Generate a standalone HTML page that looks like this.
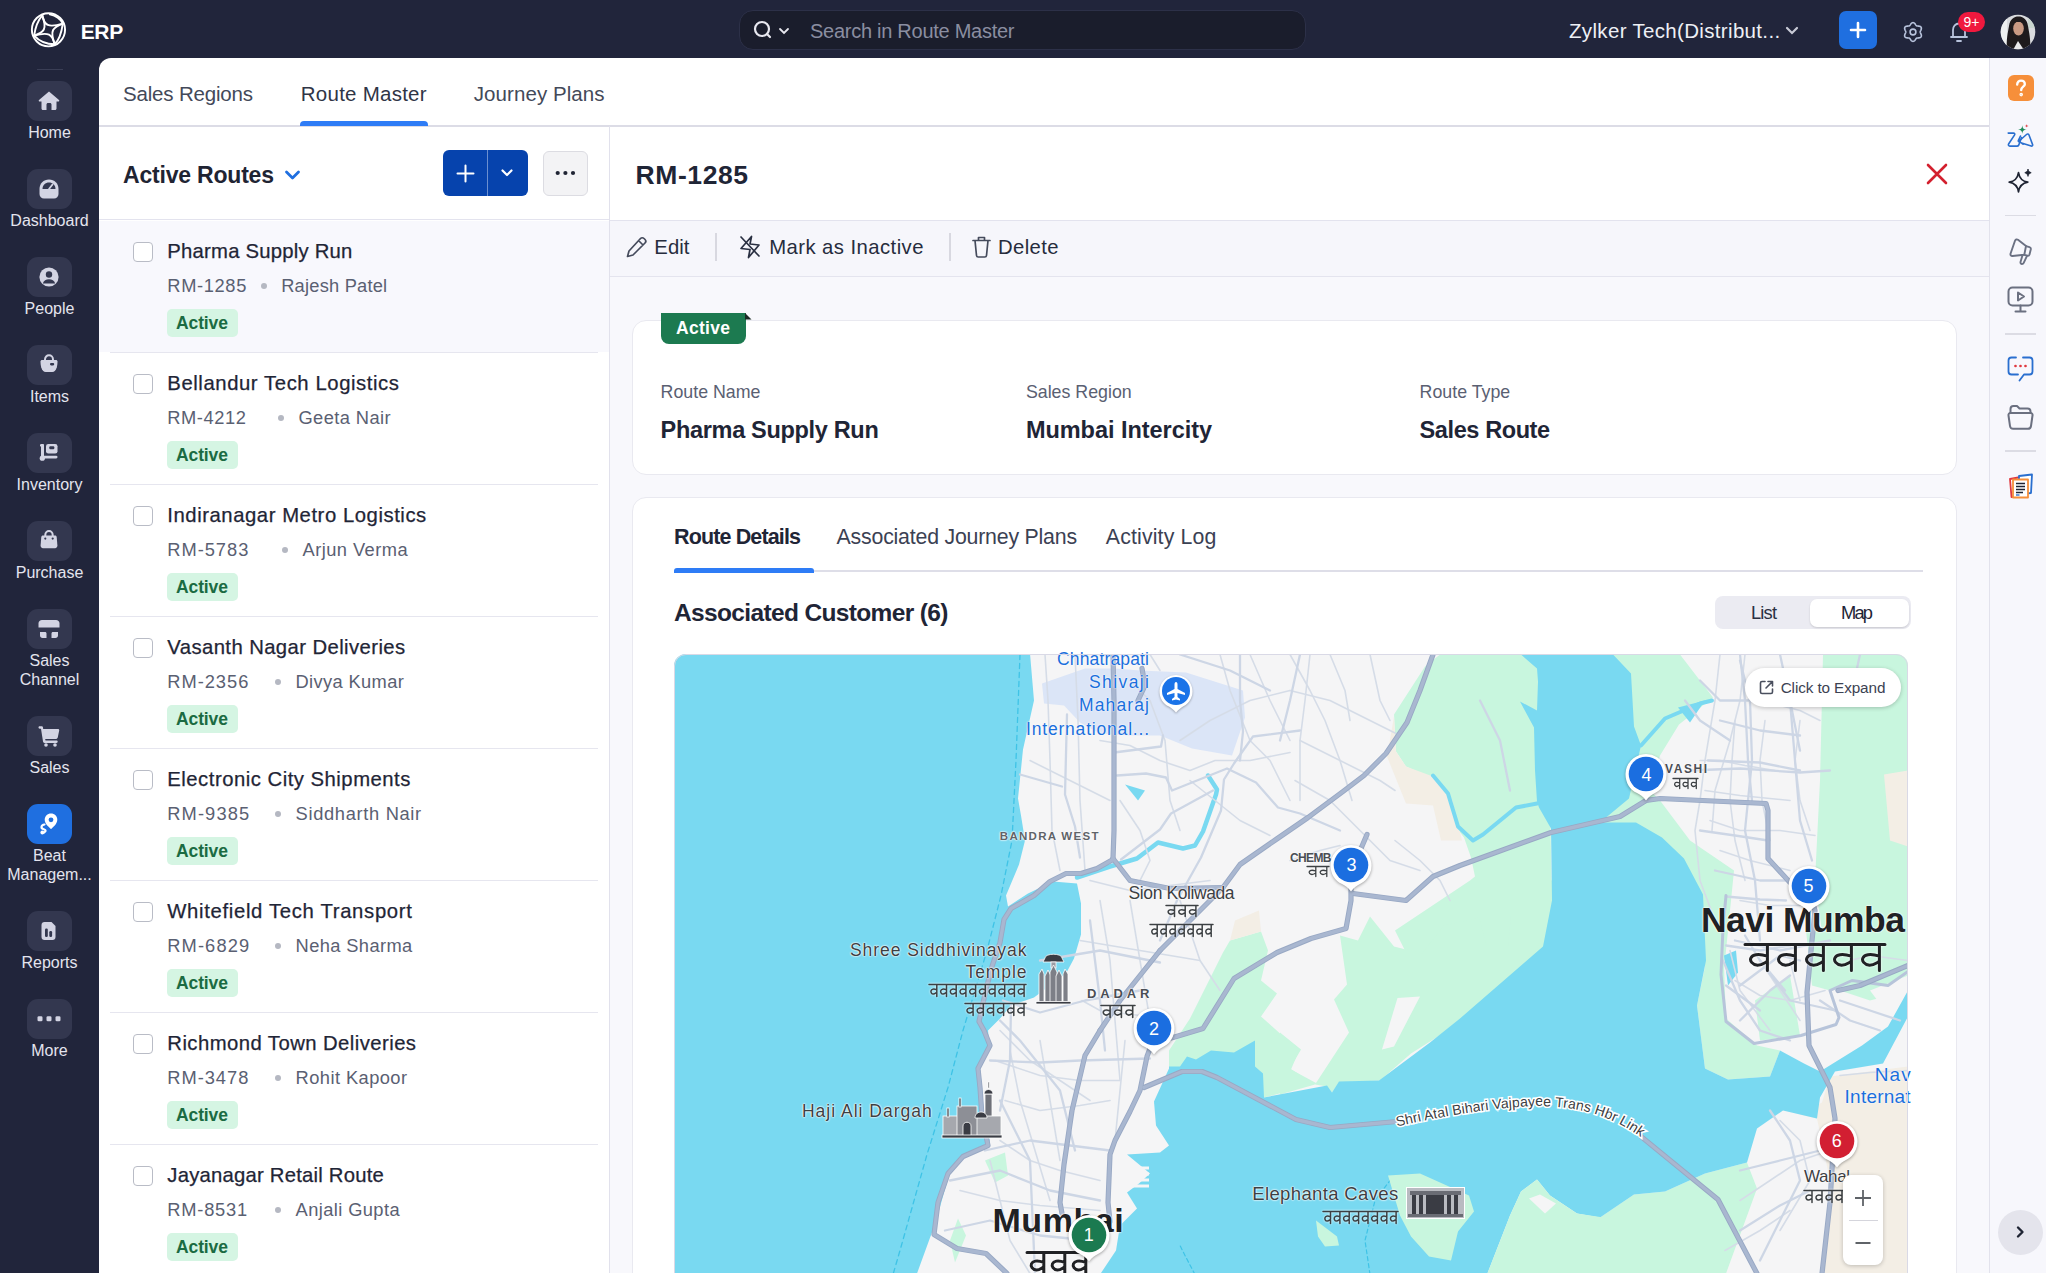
<!DOCTYPE html>
<html><head><meta charset="utf-8">
<style>
*{box-sizing:border-box;margin:0;padding:0}
html,body{width:2046px;height:1273px;overflow:hidden;background:#21253b;font-family:"Liberation Sans",sans-serif;}
.abs{position:absolute}
#top{position:absolute;left:0;top:0;width:2046px;height:58px;background:#21253b}
#side{position:absolute;left:0;top:58px;width:99px;height:1215px;background:#21253b}
#main{position:absolute;left:99px;top:58px;width:1891px;height:1215px;background:#fff;border-top-left-radius:12px;overflow:hidden}
#rail{position:absolute;left:1989px;top:58px;width:57px;height:1215px;background:#f7f7fc;border-left:1.5px solid #e2e2ec}
.t{position:absolute;white-space:nowrap;line-height:1}
.navi{position:absolute;left:27px;width:45px;height:40px;border-radius:11px;background:#33374f}
.navl{position:absolute;left:0;width:99px;text-align:center;color:#e4e4ee;font-size:16px;line-height:19px;white-space:nowrap}
.cb{position:absolute;left:133px;width:20px;height:20px;border:1.5px solid #b9bcc6;border-radius:4px;background:#fff}
.dot{position:absolute;width:6px;height:6px;border-radius:3px;background:#b5b8c2}
.badge{position:absolute;left:167px;width:71px;height:28px;border-radius:5px;background:#d5f5e3}
.divl{position:absolute;left:110px;width:488px;height:1px;background:#e6e6ef}
.mk{position:absolute}
</style></head><body>
<div id="top">
  <svg class="abs" style="left:26px;top:8px" width="44" height="44" viewBox="0 0 1273 1273" fill="none" stroke="#fff" stroke-width="56" stroke-linecap="round">
<circle cx="650" cy="630" r="480"/>
<path d="M470 215 C 530 500, 640 580, 1065 450"/><path d="M1065 450 C 780 560, 680 640, 830 1050"/><path d="M830 1050 C 760 760, 660 680, 235 800"/><path d="M235 800 C 520 700, 620 620, 470 215"/>
<path d="M690 185 C 920 240, 1010 340, 1065 450"/><path d="M1065 450 C 1030 700, 980 900, 830 1050"/><path d="M830 1050 C 590 1050, 380 960, 235 800"/><path d="M235 800 C 270 560, 330 380, 470 215"/>
</svg>
  <div class="abs" style="left:739px;top:10px;width:567px;height:40px;border-radius:14px;background:#1a1d2c;border:1px solid #2c3048"></div>
  <svg class="abs" style="left:752px;top:20px" width="40" height="20" viewBox="0 0 40 20" fill="none" stroke="#e8e8f0" stroke-width="2.2" stroke-linecap="round">
    <circle cx="10" cy="9" r="7"/><path d="M15 14 L18 17"/>
    <path d="M28 9 L32 13 L36 9" stroke-width="1.8"/>
  </svg>
  <svg class="abs" style="left:1784px;top:25px" width="16" height="12" viewBox="0 0 16 12" fill="none" stroke="#c8cad6" stroke-width="2.2" stroke-linecap="round"><path d="M3 3 L8 8 L13 3"/></svg>
  <div class="abs" style="left:1839px;top:11px;width:38px;height:38px;border-radius:7px;background:#1f6fe0"></div>
  <svg class="abs" style="left:1846px;top:18px" width="24" height="24" viewBox="0 0 24 24" stroke="#fff" stroke-width="2.6" stroke-linecap="round"><path d="M12 5 V19 M5 12 H19"/></svg>
  <svg class="abs" style="left:1901.3px;top:19.6px" width="24" height="24" viewBox="0 0 24 24" fill="none" stroke="#b8c3dc" stroke-width="1.6"><path d="M19.20 12.00 L19.24 12.38 L19.37 12.77 L19.56 13.20 L19.79 13.65 L20.02 14.15 L20.22 14.67 L20.35 15.21 L20.40 15.74 L20.33 16.24 L20.14 16.70 L19.84 17.09 L19.43 17.40 L18.95 17.63 L18.42 17.78 L17.87 17.87 L17.33 17.92 L16.82 17.95 L16.36 17.99 L15.95 18.08 L15.60 18.24 L15.29 18.46 L15.01 18.77 L14.74 19.15 L14.46 19.57 L14.15 20.02 L13.80 20.45 L13.40 20.84 L12.96 21.14 L12.49 21.33 L12.00 21.40 L11.51 21.33 L11.04 21.14 L10.60 20.84 L10.20 20.45 L9.85 20.02 L9.54 19.57 L9.26 19.15 L8.99 18.77 L8.71 18.46 L8.40 18.24 L8.05 18.08 L7.64 17.99 L7.18 17.95 L6.67 17.92 L6.13 17.87 L5.58 17.78 L5.05 17.63 L4.57 17.40 L4.16 17.09 L3.86 16.70 L3.67 16.24 L3.60 15.74 L3.65 15.21 L3.78 14.67 L3.98 14.15 L4.21 13.65 L4.44 13.20 L4.63 12.77 L4.76 12.38 L4.80 12.00 L4.76 11.62 L4.63 11.23 L4.44 10.80 L4.21 10.35 L3.98 9.85 L3.78 9.33 L3.65 8.79 L3.60 8.26 L3.67 7.76 L3.86 7.30 L4.16 6.91 L4.57 6.60 L5.05 6.37 L5.58 6.22 L6.13 6.13 L6.67 6.08 L7.18 6.05 L7.64 6.01 L8.05 5.92 L8.40 5.76 L8.71 5.54 L8.99 5.23 L9.26 4.85 L9.54 4.43 L9.85 3.98 L10.20 3.55 L10.60 3.16 L11.04 2.86 L11.51 2.67 L12.00 2.60 L12.49 2.67 L12.96 2.86 L13.40 3.16 L13.80 3.55 L14.15 3.98 L14.46 4.43 L14.74 4.85 L15.01 5.23 L15.29 5.54 L15.60 5.76 L15.95 5.92 L16.36 6.01 L16.82 6.05 L17.33 6.08 L17.87 6.13 L18.42 6.22 L18.95 6.37 L19.43 6.60 L19.84 6.91 L20.14 7.30 L20.33 7.76 L20.40 8.26 L20.35 8.79 L20.22 9.33 L20.02 9.85 L19.79 10.35 L19.56 10.80 L19.37 11.23 L19.24 11.62 L19.20 12.00Z"/><circle cx="12" cy="12" r="2.9"/></svg>
  <svg class="abs" style="left:1946px;top:18px" width="26" height="26" viewBox="0 0 26 26" fill="none" stroke="#b8c3dc" stroke-width="1.8" stroke-linecap="round" stroke-linejoin="round"><path d="M7 19 V12 C7 8.5 9.5 5.5 13 5.5 C16.5 5.5 19 8.5 19 12 V19"/><path d="M5 19 H21"/><path d="M11 23 H15"/></svg>
  <div class="abs" style="left:1958px;top:12px;width:27px;height:20px;border-radius:10px;background:#f0193e;color:#fff;font-size:14px;text-align:center;line-height:20px">9+</div>
  <svg class="abs" style="left:2000px;top:14px" width="36" height="36" viewBox="0 0 36 36"><defs><clipPath id="avc"><circle cx="18" cy="18" r="17.3"/></clipPath></defs><g clip-path="url(#avc)">
<rect width="36" height="36" fill="#d9dbde"/><rect x="0" y="0" width="7" height="36" fill="#eef0f0"/><rect x="28" y="4" width="8" height="10" fill="#c9d6cf"/>
<path d="M7 36 C6 26 8 18 9 12 C10 5 14 2.5 18.5 2.5 C23 2.5 27 5 28 12 C29 18 31 26 30 36 Z" fill="#1e1a1c"/>
<ellipse cx="18.5" cy="14.5" rx="5.3" ry="7" fill="#c99a83"/>
<path d="M13 36 L18 27 L24 36 Z" fill="#e9e9ea"/>
<path d="M12.5 9 C14 5 22 4.5 24 9 C22 7.5 15 7.5 12.5 9 Z" fill="#1e1a1c"/>
</g></svg>
</div>

<div id="toptexts"><div class="t" style="left:80.7px;top:21.1px;font-size:21.0px;font-weight:bold;color:#ffffff;letter-spacing:-0.34px;">ERP</div><div class="t" style="left:810.0px;top:20.7px;font-size:20.0px;font-weight:normal;color:#8a8ea1;letter-spacing:-0.27px;">Search in Route Master</div><div class="t" style="left:1569.0px;top:20.7px;font-size:20.5px;font-weight:normal;color:#eef0f5;letter-spacing:0.33px;">Zylker Tech(Distribut...</div></div><div id="side">
  <div class="abs" style="left:37px;top:11px;width:26px;height:1px;background:#3a3e55"></div>

  <div class="navi" style="top:23px"></div>
  <svg class="abs" style="left:37px;top:31px" width="24" height="24" viewBox="0 0 24 24" fill="#d3d4e3"><path d="M12 2.5 L22 11 C22.6 11.6 22.2 12.6 21.3 12.6 H19.5 V19.5 C19.5 20.3 18.9 21 18 21 H14.5 V15.5 C14.5 14.7 13.8 14 13 14 H11 C10.2 14 9.5 14.7 9.5 15.5 V21 H6 C5.1 21 4.5 20.3 4.5 19.5 V12.6 H2.7 C1.8 12.6 1.4 11.6 2 11 Z"/></svg>
  <div class="navl" style="top:65px">Home</div>

  <div class="navi" style="top:111px"></div>
  <svg class="abs" style="left:38px;top:120px" width="22" height="22" viewBox="0 0 22 22"><path d="M11 1.5 C16.5 1.5 20.5 5.5 20.5 11 V16 C20.5 18.5 18.5 20.5 16 20.5 H6 C3.5 20.5 1.5 18.5 1.5 16 V11 C1.5 5.5 5.5 1.5 11 1.5 Z" fill="#d3d4e3"/><path d="M4.5 11 C4.5 7 7.5 4.5 11 4.5 C14.5 4.5 17.5 7 17.5 11 Z" fill="#33374f"/><path d="M11 11 L14.5 6.5" stroke="#d3d4e3" stroke-width="1.8" stroke-linecap="round"/></svg>
  <div class="navl" style="top:153px">Dashboard</div>

  <div class="navi" style="top:199px"></div>
  <svg class="abs" style="left:38px;top:208px" width="22" height="22" viewBox="0 0 22 22"><circle cx="11" cy="11" r="9.6" fill="#d3d4e3"/><circle cx="11" cy="8.5" r="3.2" fill="#33374f"/><path d="M4.8 17.5 C5.8 14.3 8 13.2 11 13.2 C14 13.2 16.2 14.3 17.2 17.5 Z" fill="#33374f"/></svg>
  <div class="navl" style="top:241px">People</div>

  <div class="navi" style="top:287px"></div>
  <svg class="abs" style="left:38px;top:294px" width="22" height="22" viewBox="0 0 22 22"><path d="M7 9 V7.5 C7 5 8.8 3.3 11 3.3 C13.2 3.3 15 5 15 7.5 V9" fill="none" stroke="#d3d4e3" stroke-width="2"/><path d="M2.5 9.5 C2.5 8.6 3.2 8 4 8 H18 C18.8 8 19.5 8.6 19.5 9.5 C19.5 14 18.5 17 17 18.8 C16.3 19.6 15.3 20 14.3 20 H7.7 C6.7 20 5.7 19.6 5 18.8 C3.5 17 2.5 14 2.5 9.5 Z" fill="#d3d4e3"/><rect x="12" y="11" width="4.2" height="2.4" rx="1.1" fill="#33374f"/></svg>
  <div class="navl" style="top:329px">Items</div>

  <div class="navi" style="top:375px"></div>
  <svg class="abs" style="left:38px;top:383px" width="22" height="22" viewBox="0 0 22 22" fill="#d3d4e3"><rect x="3" y="3" width="3" height="14" rx="1.5"/><rect x="2" y="3" width="4" height="2.6" rx="1.2"/><rect x="4" y="14.8" width="15.5" height="2.6" rx="1.3"/><circle cx="4.3" cy="17.2" r="2.6"/><rect x="8" y="3" width="11.5" height="9.5" rx="2.3"/><rect x="11.3" y="5.3" width="5" height="3" rx="1" fill="#33374f"/></svg>
  <div class="navl" style="top:417px">Inventory</div>

  <div class="navi" style="top:463px"></div>
  <svg class="abs" style="left:38px;top:470px" width="22" height="22" viewBox="0 0 22 22"><path d="M7.3 9 V7 C7.3 4.6 9 3 11 3 C13 3 14.7 4.6 14.7 7 V9" fill="none" stroke="#d3d4e3" stroke-width="2"/><path d="M5 7.5 H17 C18 7.5 18.6 8.2 18.7 9 L19.4 17.6 C19.5 19 18.5 20.2 17 20.2 H5 C3.5 20.2 2.5 19 2.6 17.6 L3.3 9 C3.4 8.2 4 7.5 5 7.5 Z" fill="#d3d4e3"/><circle cx="7.3" cy="10.6" r="1.1" fill="#33374f"/><circle cx="14.7" cy="10.6" r="1.1" fill="#33374f"/></svg>
  <div class="navl" style="top:505px">Purchase</div>

  <div class="navi" style="top:551px"></div>
  <svg class="abs" style="left:37px;top:560px" width="24" height="22" viewBox="0 0 24 22" fill="#d3d4e3"><path d="M5 2 H19 C21 2 22.5 3.5 22.5 5.5 V9.5 H1.5 V5.5 C1.5 3.5 3 2 5 2 Z"/><path d="M3 11.5 H21 V14 H16 C15 14 14.5 14.6 14.5 15.5 V20 H18.5 C19.9 20 21 18.9 21 17.5 V11.5 Z"/><path d="M3 11.5 V17.5 C3 18.9 4.1 20 5.5 20 H9.5 V15.5 C9.5 14.6 9 14 8 14 H3 Z"/></svg>
  <div class="navl" style="top:593px">Sales<br>Channel</div>

  <div class="navi" style="top:658px"></div>
  <svg class="abs" style="left:37px;top:667px" width="24" height="22" viewBox="0 0 24 22" fill="#d3d4e3"><path d="M1.5 2.5 C1.5 1.8 2 1.3 2.7 1.3 H4.5 C5.3 1.3 5.9 1.8 6 2.6 L6.2 4 H21 C21.8 4 22.4 4.7 22.2 5.5 L20.8 12.2 C20.6 13.2 19.7 14 18.6 14 H8.2 L8.5 15.5 H19.5 C20.2 15.5 20.7 16 20.7 16.7 C20.7 17.4 20.2 17.9 19.5 17.9 H7.5 C6.7 17.9 6.1 17.4 6 16.6 L4 3.7 H2.7 C2 3.7 1.5 3.2 1.5 2.5 Z"/><circle cx="9" cy="20" r="1.8"/><circle cx="18" cy="20" r="1.8"/></svg>
  <div class="navl" style="top:700px">Sales</div>

  <div class="navi" style="top:746px;background:#1f6fe0"></div>
  <svg class="abs" style="left:36px;top:754px" width="26" height="24" viewBox="0 0 26 24"><path d="M15 1.5 C18.6 1.5 21.3 4.2 21.3 7.8 C21.3 12 16.6 15.8 15 17 C13.4 15.8 8.7 12 8.7 7.8 C8.7 4.2 11.4 1.5 15 1.5 Z" fill="#fff"/><circle cx="15" cy="7.8" r="2.4" fill="#1f6fe0"/><path d="M8.5 12.5 C5 13 4.6 16.2 7.2 17 C9.6 17.7 10.8 19 8 20.6" fill="none" stroke="#fff" stroke-width="2.2" stroke-linecap="round"/><circle cx="6.3" cy="20.5" r="1.9" fill="#fff"/></svg>
  <div class="navl" style="top:788px">Beat<br>Managem...</div>

  <div class="navi" style="top:853px"></div>
  <svg class="abs" style="left:38px;top:862px" width="22" height="22" viewBox="0 0 22 22"><path d="M6.5 2 H13.5 L17.5 6 V17 C17.5 18.8 16.3 20 14.5 20 H6.5 C4.7 20 3.5 18.8 3.5 17 V5 C3.5 3.2 4.7 2 6.5 2 Z" fill="#d3d4e3"/><rect x="7" y="8.5" width="2.8" height="8.5" rx="1.2" fill="#33374f"/><rect x="11.3" y="11" width="2.8" height="6" rx="1.2" fill="#33374f"/></svg>
  <div class="navl" style="top:895px">Reports</div>

  <div class="navi" style="top:941px"></div>
  <svg class="abs" style="left:36px;top:951px" width="26" height="20" viewBox="0 0 26 20" fill="#d3d4e3"><rect x="1.5" y="7.3" width="5" height="5" rx="1.3"/><rect x="10.5" y="7.3" width="5" height="5" rx="1.3"/><rect x="19.5" y="7.3" width="5" height="5" rx="1.3"/></svg>
  <div class="navl" style="top:983px">More</div>

</div>


<div id="main"></div>
<div class="t" style="left:123.0px;top:84.0px;font-size:20.5px;font-weight:normal;color:#434959;letter-spacing:-0.18px;">Sales Regions</div>
<div class="t" style="left:300.8px;top:84.0px;font-size:20.5px;font-weight:normal;color:#2f3546;letter-spacing:0.25px;">Route Master</div>
<div class="t" style="left:473.8px;top:84.0px;font-size:20.5px;font-weight:normal;color:#434959;letter-spacing:0.07px;">Journey Plans</div>
<div class="abs" style="left:99px;top:125px;width:1891px;height:1.5px;background:#dcdce6"></div>
<div class="abs" style="left:300px;top:121px;width:128px;height:5px;border-radius:4px 4px 0 0;background:#2e7cf6"></div>
<div class="abs" style="left:609px;top:126px;width:1px;height:1147px;background:#e1e1ec"></div>
<div class="t" style="left:123.0px;top:163.6px;font-size:23.0px;font-weight:bold;color:#1f2433;letter-spacing:-0.20px;">Active Routes</div>
<svg class="abs" style="left:284px;top:168px" width="17" height="14" viewBox="0 0 17 14" fill="none" stroke="#1f6fe0" stroke-width="2.8" stroke-linecap="round" stroke-linejoin="round"><path d="M2.5 4 L8.5 10 L14.5 4"/></svg>
<div class="abs" style="left:443px;top:150px;width:85px;height:46px;border-radius:6px;background:#0643ad"></div>
<div class="abs" style="left:487px;top:150px;width:1px;height:46px;background:#6b8fd0"></div>
<svg class="abs" style="left:456px;top:164px" width="19" height="19" viewBox="0 0 19 19" stroke="#fff" stroke-width="2" stroke-linecap="round"><path d="M9.5 1.5 V17.5 M1.5 9.5 H17.5"/></svg>
<svg class="abs" style="left:500px;top:167px" width="14" height="12" viewBox="0 0 14 12" fill="none" stroke="#fff" stroke-width="2.2" stroke-linecap="round" stroke-linejoin="round"><path d="M2.5 3.5 L7 8 L11.5 3.5"/></svg>
<div class="abs" style="left:543px;top:151px;width:45px;height:45px;border-radius:6px;background:#f3f3f5;border:1px solid #dcdce2"></div>
<svg class="abs" style="left:554px;top:169px" width="24" height="8" viewBox="0 0 24 8" fill="#1f2433"><circle cx="3.7" cy="4" r="2.1"/><circle cx="11.4" cy="4" r="2.1"/><circle cx="19" cy="4" r="2.1"/></svg>
<div class="abs" style="left:99px;top:219px;width:510px;height:1px;background:#e3e3ee"></div>
<div class="abs" style="left:99px;top:220.5px;width:510px;height:131.5px;background:#f8f8fd"></div>
<div class="cb" style="top:242.0px"></div>
<div class="t" style="left:167.3px;top:241.1px;font-size:20.3px;font-weight:normal;color:#1f2536;letter-spacing:0.22px;-webkit-text-stroke:0.25px #1f2536;">Pharma Supply Run</div>
<div class="t" style="left:167.3px;top:276.5px;font-size:18.3px;font-weight:normal;color:#5a6072;letter-spacing:0.64px;">RM-1285</div>
<div class="dot" style="left:261.0px;top:283.0px"></div>
<div class="t" style="left:281.2px;top:276.5px;font-size:18.3px;font-weight:normal;color:#5a6072;letter-spacing:0.21px;">Rajesh Patel</div>
<div class="badge" style="top:309.0px"></div>
<div class="t" style="left:176.0px;top:314.7px;font-size:17.5px;font-weight:bold;color:#1b6b42;letter-spacing:-0.11px;">Active</div>
<div class="divl" style="top:351.5px"></div>
<div class="cb" style="top:374.0px"></div>
<div class="t" style="left:167.3px;top:373.1px;font-size:20.3px;font-weight:normal;color:#1f2536;letter-spacing:0.58px;-webkit-text-stroke:0.25px #1f2536;">Bellandur Tech Logistics</div>
<div class="t" style="left:167.3px;top:408.5px;font-size:18.3px;font-weight:normal;color:#5a6072;letter-spacing:0.57px;">RM-4212</div>
<div class="dot" style="left:278.0px;top:415.0px"></div>
<div class="t" style="left:298.5px;top:408.5px;font-size:18.3px;font-weight:normal;color:#5a6072;letter-spacing:0.40px;">Geeta Nair</div>
<div class="badge" style="top:441.0px"></div>
<div class="t" style="left:176.0px;top:446.7px;font-size:17.5px;font-weight:bold;color:#1b6b42;letter-spacing:-0.11px;">Active</div>
<div class="divl" style="top:483.5px"></div>
<div class="cb" style="top:506.0px"></div>
<div class="t" style="left:167.3px;top:505.1px;font-size:20.3px;font-weight:normal;color:#1f2536;letter-spacing:0.55px;-webkit-text-stroke:0.25px #1f2536;">Indiranagar Metro Logistics</div>
<div class="t" style="left:167.3px;top:540.5px;font-size:18.3px;font-weight:normal;color:#5a6072;letter-spacing:0.97px;">RM-5783</div>
<div class="dot" style="left:282.0px;top:547.0px"></div>
<div class="t" style="left:302.6px;top:540.5px;font-size:18.3px;font-weight:normal;color:#5a6072;letter-spacing:0.44px;">Arjun Verma</div>
<div class="badge" style="top:573.0px"></div>
<div class="t" style="left:176.0px;top:578.7px;font-size:17.5px;font-weight:bold;color:#1b6b42;letter-spacing:-0.11px;">Active</div>
<div class="divl" style="top:615.5px"></div>
<div class="cb" style="top:638.0px"></div>
<div class="t" style="left:167.3px;top:637.1px;font-size:20.3px;font-weight:normal;color:#1f2536;letter-spacing:0.41px;-webkit-text-stroke:0.25px #1f2536;">Vasanth Nagar Deliveries</div>
<div class="t" style="left:167.3px;top:672.5px;font-size:18.3px;font-weight:normal;color:#5a6072;letter-spacing:0.97px;">RM-2356</div>
<div class="dot" style="left:274.8px;top:679.0px"></div>
<div class="t" style="left:295.4px;top:672.5px;font-size:18.3px;font-weight:normal;color:#5a6072;letter-spacing:0.38px;">Divya Kumar</div>
<div class="badge" style="top:705.0px"></div>
<div class="t" style="left:176.0px;top:710.7px;font-size:17.5px;font-weight:bold;color:#1b6b42;letter-spacing:-0.11px;">Active</div>
<div class="divl" style="top:747.5px"></div>
<div class="cb" style="top:770.0px"></div>
<div class="t" style="left:167.3px;top:769.1px;font-size:20.3px;font-weight:normal;color:#1f2536;letter-spacing:0.50px;-webkit-text-stroke:0.25px #1f2536;">Electronic City Shipments</div>
<div class="t" style="left:167.3px;top:804.5px;font-size:18.3px;font-weight:normal;color:#5a6072;letter-spacing:1.10px;">RM-9385</div>
<div class="dot" style="left:274.8px;top:811.0px"></div>
<div class="t" style="left:295.6px;top:804.5px;font-size:18.3px;font-weight:normal;color:#5a6072;letter-spacing:0.67px;">Siddharth Nair</div>
<div class="badge" style="top:837.0px"></div>
<div class="t" style="left:176.0px;top:842.7px;font-size:17.5px;font-weight:bold;color:#1b6b42;letter-spacing:-0.11px;">Active</div>
<div class="divl" style="top:879.5px"></div>
<div class="cb" style="top:902.0px"></div>
<div class="t" style="left:167.3px;top:901.1px;font-size:20.3px;font-weight:normal;color:#1f2536;letter-spacing:0.67px;-webkit-text-stroke:0.25px #1f2536;">Whitefield Tech Transport</div>
<div class="t" style="left:167.3px;top:936.5px;font-size:18.3px;font-weight:normal;color:#5a6072;letter-spacing:1.10px;">RM-6829</div>
<div class="dot" style="left:274.8px;top:943.0px"></div>
<div class="t" style="left:295.6px;top:936.5px;font-size:18.3px;font-weight:normal;color:#5a6072;letter-spacing:0.38px;">Neha Sharma</div>
<div class="badge" style="top:969.0px"></div>
<div class="t" style="left:176.0px;top:974.7px;font-size:17.5px;font-weight:bold;color:#1b6b42;letter-spacing:-0.11px;">Active</div>
<div class="divl" style="top:1011.5px"></div>
<div class="cb" style="top:1034.0px"></div>
<div class="t" style="left:167.3px;top:1033.1px;font-size:20.3px;font-weight:normal;color:#1f2536;letter-spacing:0.44px;-webkit-text-stroke:0.25px #1f2536;">Richmond Town Deliveries</div>
<div class="t" style="left:167.3px;top:1068.5px;font-size:18.3px;font-weight:normal;color:#5a6072;letter-spacing:0.97px;">RM-3478</div>
<div class="dot" style="left:274.8px;top:1075.0px"></div>
<div class="t" style="left:295.6px;top:1068.5px;font-size:18.3px;font-weight:normal;color:#5a6072;letter-spacing:0.43px;">Rohit Kapoor</div>
<div class="badge" style="top:1101.0px"></div>
<div class="t" style="left:176.0px;top:1106.7px;font-size:17.5px;font-weight:bold;color:#1b6b42;letter-spacing:-0.11px;">Active</div>
<div class="divl" style="top:1143.5px"></div>
<div class="cb" style="top:1166.0px"></div>
<div class="t" style="left:167.3px;top:1165.1px;font-size:20.3px;font-weight:normal;color:#1f2536;letter-spacing:0.22px;-webkit-text-stroke:0.25px #1f2536;">Jayanagar Retail Route</div>
<div class="t" style="left:167.3px;top:1200.5px;font-size:18.3px;font-weight:normal;color:#5a6072;letter-spacing:0.77px;">RM-8531</div>
<div class="dot" style="left:274.8px;top:1207.0px"></div>
<div class="t" style="left:295.6px;top:1200.5px;font-size:18.3px;font-weight:normal;color:#5a6072;letter-spacing:0.40px;">Anjali Gupta</div>
<div class="badge" style="top:1233.0px"></div>
<div class="t" style="left:176.0px;top:1238.7px;font-size:17.5px;font-weight:bold;color:#1b6b42;letter-spacing:-0.11px;">Active</div>
<div class="t" style="left:635.5px;top:162.0px;font-size:26.5px;font-weight:bold;color:#1f2536;letter-spacing:0.59px;">RM-1285</div>
<svg class="abs" style="left:1925px;top:162px" width="24" height="24" viewBox="0 0 24 24" stroke="#d3202e" stroke-width="2.6" stroke-linecap="round"><path d="M3 3 L21 21 M21 3 L3 21"/></svg>
<div class="abs" style="left:610px;top:220px;width:1379px;height:1053px;background:#f8f8fc"></div>
<div class="abs" style="left:610px;top:219.5px;width:1379px;height:1px;background:#e3e3ee"></div>
<div class="abs" style="left:610px;top:220.5px;width:1379px;height:55.5px;background:#f6f6fb"></div>
<div class="abs" style="left:610px;top:276px;width:1379px;height:1px;background:#e4e4ee"></div>
<svg class="abs" style="left:625px;top:236px" width="23" height="22" viewBox="0 0 23 22" fill="none" stroke="#454b5c" stroke-width="1.7" stroke-linejoin="round"><path d="M15.5 2.5 C16.5 1.5 18 1.5 19 2.5 L20 3.5 C21 4.5 21 6 20 7 L8 19 L2.5 20.5 L4 15 Z M13.5 4.5 L18 9"/></svg>
<div class="t" style="left:654.3px;top:237.1px;font-size:20.3px;font-weight:normal;color:#262c3d;letter-spacing:0.08px;">Edit</div>
<div class="abs" style="left:715px;top:233px;width:1.5px;height:28px;background:#d8d8e0"></div>
<svg class="abs" style="left:739px;top:235px" width="22" height="24" viewBox="0 0 22 24" fill="none" stroke="#2a3042" stroke-width="1.7" stroke-linejoin="round" stroke-linecap="round"><path d="M12.5 1.5 L11 9 L20 10 L9.5 22.5 L11 14.5 L2 13.5 Z"/><path d="M2 2 L20 21"/></svg>
<div class="t" style="left:769.2px;top:237.1px;font-size:20.3px;font-weight:normal;color:#262c3d;letter-spacing:0.44px;">Mark as Inactive</div>
<div class="abs" style="left:949px;top:233px;width:1.5px;height:28px;background:#d8d8e0"></div>
<svg class="abs" style="left:971px;top:235px" width="21" height="24" viewBox="0 0 21 24" fill="none" stroke="#454b5c" stroke-width="1.7" stroke-linejoin="round" stroke-linecap="round"><path d="M2 5.5 H19 M7.5 5.5 V2.5 H13.5 V5.5 M4 5.5 L5.5 20.5 C5.6 21.4 6.3 22 7.2 22 H13.8 C14.7 22 15.4 21.4 15.5 20.5 L17 5.5"/></svg>
<div class="t" style="left:998.0px;top:237.1px;font-size:20.3px;font-weight:normal;color:#262c3d;letter-spacing:0.37px;">Delete</div>
<div class="abs" style="left:632px;top:320px;width:1325px;height:155px;background:#fff;border:1px solid #e9e9f0;border-radius:14px"></div>
<div class="abs" style="left:661px;top:313px;width:85px;height:31px;background:#1c7a50;border-radius:0 0 8px 8px"></div>
<svg class="abs" style="left:745px;top:313px" width="7" height="7" viewBox="0 0 7 7"><path d="M0 0 L6.5 6.5 H0 Z" fill="#1b2a25"/></svg>
<div class="t" style="left:676.0px;top:319.8px;font-size:17.5px;font-weight:bold;color:#ffffff;letter-spacing:0.29px;">Active</div>
<div class="t" style="left:660.6px;top:384.0px;font-size:17.8px;font-weight:normal;color:#5a6072;letter-spacing:0.00px;">Route Name</div>
<div class="t" style="left:660.6px;top:418.6px;font-size:23.5px;font-weight:bold;color:#1f2536;letter-spacing:-0.32px;">Pharma Supply Run</div>
<div class="t" style="left:1025.9px;top:384.0px;font-size:17.8px;font-weight:normal;color:#5a6072;letter-spacing:0.00px;">Sales Region</div>
<div class="t" style="left:1025.9px;top:418.6px;font-size:23.5px;font-weight:bold;color:#1f2536;letter-spacing:-0.04px;">Mumbai Intercity</div>
<div class="t" style="left:1419.6px;top:384.0px;font-size:17.8px;font-weight:normal;color:#5a6072;letter-spacing:0.00px;">Route Type</div>
<div class="t" style="left:1419.6px;top:418.6px;font-size:23.5px;font-weight:bold;color:#1f2536;letter-spacing:-0.40px;">Sales Route</div>
<div class="abs" style="left:632px;top:497px;width:1325px;height:820px;background:#fff;border:1px solid #e9e9f0;border-radius:14px"></div>
<div class="t" style="left:674.0px;top:527.2px;font-size:21.5px;font-weight:bold;color:#1f2536;letter-spacing:-0.87px;">Route Details</div>
<div class="t" style="left:836.6px;top:527.4px;font-size:21.3px;font-weight:normal;color:#3b4153;letter-spacing:-0.20px;">Associated Journey Plans</div>
<div class="t" style="left:1105.8px;top:527.4px;font-size:21.3px;font-weight:normal;color:#3b4153;letter-spacing:0.15px;">Activity Log</div>
<div class="abs" style="left:674px;top:570px;width:1249px;height:1.5px;background:#dedee8"></div>
<div class="abs" style="left:673.5px;top:568px;width:140px;height:4.5px;border-radius:3px 3px 0 0;background:#2e7cf6"></div>
<div class="t" style="left:674.0px;top:600.6px;font-size:24.5px;font-weight:bold;color:#1f2536;letter-spacing:-0.65px;">Associated Customer (6)</div>
<div class="abs" style="left:1714.5px;top:596px;width:196px;height:33px;border-radius:8px;background:#ebebf2"></div>
<div class="abs" style="left:1809.5px;top:598.5px;width:99px;height:28px;border-radius:7px;background:#fff;box-shadow:0 1px 2px rgba(0,0,0,.15)"></div>
<div class="t" style="left:1751.0px;top:603.5px;font-size:18.3px;font-weight:normal;color:#2a3042;letter-spacing:-0.82px;">List</div>
<div class="t" style="left:1841.0px;top:603.5px;font-size:18.3px;font-weight:normal;color:#1f2536;letter-spacing:-1.78px;">Map</div>
<div class="abs" id="map" style="left:674px;top:653.5px;width:1234px;height:660px;border-radius:12px;overflow:hidden;background:#f5f5f6"><svg class="abs" style="left:0;top:0" width="1234" height="660" viewBox="674 653.5 1234 660">
<rect x="674" y="653" width="1234" height="661" fill="#f5f5f6"/>
<path d="M1440.0 654.0 L1547.0 654.0 L1552.0 900.0 L1560.0 960.0 L1545.0 990.0 L1490.0 1000.0 L1440.0 990.0 L1410.0 960.0 L1395.0 930.0 L1470.0 880.0 L1475.0 876.0 L1471.0 857.0 L1464.0 837.0 L1454.0 824.0 L1433.0 778.0 L1406.0 766.0 L1396.0 751.0 L1394.0 714.0 L1425.0 666.0 Z" fill="#c8f6de" />
<path d="M1394.0 716.0 L1387.0 756.0 L1406.0 803.0 L1433.0 805.0 L1441.0 840.0 L1462.0 840.0 L1452.0 799.0 L1433.0 776.0 L1406.0 766.0 L1396.0 751.0 Z" fill="#f3eee5" />
<path d="M1600.0 654.0 L1680.0 654.0 L1713.0 697.0 L1679.0 724.0 L1660.0 755.0 L1650.0 790.0 L1660.0 800.0 L1690.0 840.0 L1734.0 870.0 L1725.0 960.0 L1600.0 960.0 Z" fill="#c8f6de" />
<path d="M1823.0 654.0 L1908.0 654.0 L1908.0 990.0 L1870.0 1000.0 L1840.0 990.0 L1823.0 940.0 L1815.0 880.0 L1820.0 780.0 Z" fill="#c8f6de" />
<path d="M1884.0 774.0 L1908.0 770.0 L1908.0 846.0 L1890.0 840.0 Z" fill="#f3eee5" />
<path d="M1169.0 1050.0 L1190.0 1018.0 L1223.0 952.0 L1230.0 940.0 L1261.0 931.0 L1268.0 950.0 L1261.0 980.0 L1277.0 993.0 L1261.0 1016.0 L1299.0 1050.0 L1291.0 1069.0 L1317.0 1083.0 L1264.0 1097.0 L1169.0 1097.0 Z" fill="#c8f6de" />
<path d="M1230.0 940.0 L1235.0 920.0 L1259.0 910.0 L1261.0 931.0 Z" fill="#f3eee5" />
<path d="M1484.0 880.0 L1553.0 880.0 L1553.0 908.0 L1543.0 935.0 L1529.0 963.0 L1501.0 991.0 L1460.0 1022.0 L1411.0 1053.0 L1380.0 1080.0 L1339.0 1082.0 L1332.0 1092.0 L1327.0 1086.0 L1315.0 1084.0 L1349.0 1032.0 L1334.0 999.0 L1347.0 984.0 L1340.0 935.0 L1358.0 940.0 L1370.0 916.0 L1394.0 946.0 L1422.0 953.0 L1444.0 925.0 L1479.0 917.0 L1487.0 946.0 L1508.0 946.0 L1511.0 916.0 Z" fill="#c8f6de" />
<path d="M1397.5 997.5 L1420.0 996.0 L1394.0 1046.0 L1382.0 1049.0 Z" fill="#f5f5f6" />
<path d="M1280.0 1032.0 L1301.0 1049.0 L1290.0 1068.0 L1315.0 1084.0 L1280.0 1094.0 Z" fill="#c8f6de" />
<path d="M1169.0 1067.0 L1179.0 1056.0 L1235.0 1051.0 L1256.0 1040.0 L1262.0 1096.0 L1169.0 1097.0 Z" fill="#c8f6de" />
<path d="M1699.0 940.0 L1723.0 940.0 L1726.0 1018.0 L1757.0 1045.0 L1780.0 1050.0 L1770.0 1076.0 L1728.0 1079.0 L1705.0 1068.0 L1697.0 1005.0 L1705.0 966.0 Z" fill="#c8f6de" />
<path d="M1806.0 930.0 L1850.0 925.0 L1870.0 950.0 L1852.0 980.0 L1830.0 990.0 L1812.0 985.0 Z" fill="#c8f6de" />
<path d="M1755.0 1000.0 L1790.0 975.0 L1800.0 1035.0 L1760.0 1040.0 Z" fill="#c8f6de" />
<path d="M1870.0 990.0 L1908.0 975.0 L1908.0 1000.0 L1885.0 1010.0 Z" fill="#f5f5f6" />
<path d="M1830.0 1076.0 L1908.0 1066.0 L1908.0 1273.0 L1718.0 1273.0 L1731.0 1188.0 L1783.0 1123.0 L1822.0 1102.0 Z" fill="#f3eee5" />
<path d="M1746.0 1123.0 L1790.0 1112.0 L1817.0 1118.0 L1830.0 1180.0 L1822.0 1273.0 L1718.0 1273.0 L1731.0 1200.0 Z" fill="#f5f5f6" />
<path d="M1600.0 1217.0 L1634.0 1194.0 L1665.0 1191.0 L1705.0 1173.0 L1747.0 1162.0 L1757.0 1188.0 L1726.0 1273.0 L1600.0 1273.0 Z" fill="#c8f6de" />
<path d="M1042.0 683.0 L1085.0 668.0 L1115.0 668.0 L1140.0 670.0 L1186.0 672.0 L1243.0 690.0 L1245.0 717.0 L1232.0 755.0 L1192.0 748.0 L1160.0 735.0 L1130.0 735.0 L1100.0 733.0 L1080.0 722.0 L1064.0 705.0 L1044.0 703.0 Z" fill="#dbe5f7" />
<path d="M985.0 1160.0 L1005.0 1152.0 L1008.0 1175.0 L995.0 1182.0 Z" fill="#c8f6de" />
<path d="M950.0 1240.0 L958.0 1218.0 L966.0 1235.0 L955.0 1262.0 Z" fill="#c8f6de" />
<path d="M674.0 653.0 L1030.0 653.0 L1034.0 700.0 L1023.0 749.0 L1018.0 798.0 L1021.0 815.0 L1025.0 840.0 L1019.0 864.0 L1006.0 895.0 L1008.0 906.0 L1028.0 893.0 L1053.0 881.0 L1077.0 883.0 L1081.0 903.0 L1081.0 934.0 L1074.0 958.0 L1066.0 973.0 L1034.0 997.0 L1011.0 1005.0 L1000.0 1018.0 L988.0 1030.0 L990.0 1049.0 L980.0 1068.0 L982.0 1087.0 L984.0 1116.0 L990.0 1141.0 L967.0 1154.0 L952.0 1167.0 L944.0 1192.0 L936.0 1221.0 L929.0 1240.0 L917.0 1273.0 L674.0 1274.0 Z" fill="#79d9f1" />
<path d="M1100.0 1274.0 L1116.0 1250.0 L1120.0 1225.0 L1137.0 1208.0 L1127.0 1192.0 L1139.0 1183.0 L1150.0 1173.0 L1127.0 1154.0 L1160.0 1152.0 L1169.0 1145.0 L1156.0 1125.0 L1154.0 1101.0 L1169.0 1068.0 L1169.0 1092.0 L1152.0 1104.0 L1169.0 1092.0 L1169.0 1066.0 L1180.0 1066.0 L1187.0 1056.0 L1196.0 1059.0 L1211.0 1050.0 L1234.0 1052.0 L1255.0 1040.0 L1255.0 1066.0 L1263.0 1073.0 L1264.0 1097.0 L1327.0 1085.0 L1332.0 1092.0 L1339.0 1081.0 L1379.0 1080.0 L1430.0 1042.0 L1460.0 1018.0 L1543.0 946.0 L1552.0 900.0 L1551.0 828.0 L1539.0 807.0 L1537.0 801.0 L1535.0 770.0 L1534.0 727.0 L1520.0 701.0 L1537.0 710.0 L1538.0 681.0 L1537.0 668.0 L1521.0 654.0 L1613.0 654.0 L1631.0 673.0 L1634.0 726.0 L1641.0 745.0 L1629.0 798.0 L1600.0 822.0 L1636.0 822.0 L1662.0 837.0 L1684.0 858.0 L1703.0 894.0 L1706.0 960.0 L1697.0 1005.0 L1705.0 1068.0 L1728.0 1079.0 L1770.0 1076.0 L1780.0 1050.0 L1804.0 1063.0 L1820.0 1071.0 L1862.0 1045.0 L1888.0 1026.0 L1908.0 990.0 L1908.0 1016.0 L1883.0 1063.0 L1835.0 1071.0 L1820.0 1097.0 L1817.0 1118.0 L1783.0 1110.0 L1757.0 1128.0 L1747.0 1162.0 L1705.0 1173.0 L1665.0 1191.0 L1634.0 1194.0 L1600.0 1217.0 L1577.0 1213.0 L1550.0 1195.0 L1537.0 1179.0 L1521.0 1191.0 L1510.0 1215.0 L1487.0 1274.0 Z" fill="#79d9f1" />
<path d="M1077.0 877.0 L1110.0 866.0 L1137.0 858.0 L1158.0 842.0 L1183.0 848.0 L1195.0 845.0 L1203.0 831.0 L1216.0 794.0 L1217.0 789.0 L1208.0 775.0" fill="none" stroke="#79d9f1" stroke-width="4.5" stroke-linejoin="round" stroke-linecap="round" />
<path d="M1125.0 784.0 L1145.0 790.0 L1138.0 800.0 Z" fill="#79d9f1" />
<path d="M1537.0 803.0 L1516.0 807.0 L1483.0 834.0 L1473.0 840.0 L1458.0 826.0 L1448.0 793.0 L1433.0 775.0" fill="none" stroke="#79d9f1" stroke-width="4" stroke-linejoin="round" stroke-linecap="round" />
<path d="M1600.0 760.0 L1640.0 745.0 L1680.0 700.0 L1700.0 695.0 L1660.0 760.0 L1630.0 800.0 Z" fill="#79d9f1" opacity="0"/>
<path d="M1641.0 745.0 L1665.0 718.0 L1700.0 703.0 L1712.0 700.0" fill="none" stroke="#79d9f1" stroke-width="4" stroke-linejoin="round" stroke-linecap="round" />
<path d="M1678.0 707.0 L1705.0 700.0 L1690.0 722.0 Z" fill="#79d9f1" />
<path d="M1724.0 955.0 L1736.0 950.0 L1738.0 972.0 L1728.0 985.0 Z" fill="#79d9f1" />
<path d="M1020.0 654.0 L1016.0 760.0 L1012.0 840.0 L1001.0 895.0 L987.0 950.0 L963.0 1030.0 L948.0 1087.0 L927.0 1154.0 L900.0 1250.0 L893.0 1274.0" fill="none" stroke="#3fc3e6" stroke-width="1.3" stroke-linejoin="round" stroke-linecap="round" stroke-dasharray="5 4"/>
<path d="M1390.0 1180.0 L1410.0 1176.0 L1430.0 1180.0 L1440.0 1190.0" fill="none" stroke="#3fc3e6" stroke-width="1.2" stroke-linejoin="round" stroke-linecap="round" stroke-dasharray="4 3"/>
<path d="M1370.0 1274.0 L1365.0 1240.0 L1375.0 1200.0 L1390.0 1180.0" fill="none" stroke="#3fc3e6" stroke-width="1.2" stroke-linejoin="round" stroke-linecap="round" stroke-dasharray="4 3"/>
<path d="M1195.0 1274.0 L1185.0 1255.0 L1180.0 1245.0" fill="none" stroke="#3fc3e6" stroke-width="1.2" stroke-linejoin="round" stroke-linecap="round" stroke-dasharray="4 3"/>
<path d="M1388.0 1175.0 L1420.0 1173.0 L1469.0 1195.0 L1474.0 1211.0 L1458.0 1231.0 L1451.0 1260.0 L1429.0 1256.0 L1411.0 1236.0 L1400.0 1215.0 Z" fill="#c8f6de" />
<path d="M1316.0 1220.0 L1337.0 1236.0 L1339.0 1245.0 L1325.0 1246.0 L1318.0 1236.0 Z" fill="#c8f6de" />
<path d="M1521.0 1191.0 L1537.0 1179.0 L1550.0 1195.0 L1577.0 1213.0 L1610.0 1218.0 L1610.0 1274.0 L1487.0 1274.0 L1510.0 1215.0 Z" fill="#c8f6de" />
<path d="M1529.0 1198.0 L1540.0 1194.0 L1556.0 1203.0 L1545.0 1213.0 Z" fill="#f5f5f6" />
<rect x="1127" y="1166" width="22" height="3" fill="#f5f5f6"/>
<rect x="1127" y="1172" width="22" height="3" fill="#f5f5f6"/>
<rect x="1127" y="1178" width="22" height="3" fill="#f5f5f6"/>
<rect x="1127" y="1184" width="22" height="3" fill="#f5f5f6"/>
<path d="M1045.0 654.0 L1048.0 700.0 L1050.0 760.0 L1052.0 830.0 L1060.0 870.0" fill="none" stroke="#d5dce7" stroke-width="1.6" stroke-linejoin="round" stroke-linecap="round" />
<path d="M1075.0 654.0 L1078.0 720.0 L1080.0 800.0 L1085.0 870.0" fill="none" stroke="#d5dce7" stroke-width="1.6" stroke-linejoin="round" stroke-linecap="round" />
<path d="M1100.0 740.0 L1130.0 745.0 L1160.0 760.0 L1190.0 770.0 L1215.0 760.0 L1250.0 760.0 L1290.0 752.0" fill="none" stroke="#d5dce7" stroke-width="1.6" stroke-linejoin="round" stroke-linecap="round" />
<path d="M1030.0 760.0 L1060.0 775.0 L1090.0 790.0 L1110.0 800.0" fill="none" stroke="#d5dce7" stroke-width="1.6" stroke-linejoin="round" stroke-linecap="round" />
<path d="M1130.0 680.0 L1150.0 700.0 L1165.0 740.0 L1170.0 800.0 L1180.0 830.0" fill="none" stroke="#d5dce7" stroke-width="1.6" stroke-linejoin="round" stroke-linecap="round" />
<path d="M1180.0 740.0 L1210.0 720.0 L1250.0 700.0 L1290.0 690.0" fill="none" stroke="#d5dce7" stroke-width="1.6" stroke-linejoin="round" stroke-linecap="round" />
<path d="M1190.0 780.0 L1215.0 800.0 L1240.0 820.0 L1270.0 835.0" fill="none" stroke="#d5dce7" stroke-width="1.6" stroke-linejoin="round" stroke-linecap="round" />
<path d="M1220.0 654.0 L1230.0 690.0 L1250.0 740.0 L1270.0 760.0 L1290.0 800.0" fill="none" stroke="#d5dce7" stroke-width="1.6" stroke-linejoin="round" stroke-linecap="round" />
<path d="M1120.0 800.0 L1140.0 830.0 L1150.0 860.0 L1140.0 880.0" fill="none" stroke="#d5dce7" stroke-width="1.6" stroke-linejoin="round" stroke-linecap="round" />
<path d="M1250.0 654.0 L1270.0 700.0 L1290.0 740.0" fill="none" stroke="#d5dce7" stroke-width="1.6" stroke-linejoin="round" stroke-linecap="round" />
<path d="M1150.0 654.0 L1160.0 670.0" fill="none" stroke="#d5dce7" stroke-width="1.6" stroke-linejoin="round" stroke-linecap="round" />
<path d="M1290.0 654.0 L1310.0 690.0 L1325.0 720.0 L1340.0 760.0 L1352.0 800.0" fill="none" stroke="#d5dce7" stroke-width="1.6" stroke-linejoin="round" stroke-linecap="round" />
<path d="M1290.0 690.0 L1330.0 700.0 L1370.0 720.0 L1400.0 735.0" fill="none" stroke="#d5dce7" stroke-width="1.6" stroke-linejoin="round" stroke-linecap="round" />
<path d="M1300.0 740.0 L1340.0 760.0 L1380.0 780.0 L1395.0 790.0" fill="none" stroke="#d5dce7" stroke-width="1.6" stroke-linejoin="round" stroke-linecap="round" />
<path d="M1295.0 780.0 L1330.0 800.0 L1360.0 830.0 L1390.0 860.0 L1420.0 870.0" fill="none" stroke="#d5dce7" stroke-width="1.6" stroke-linejoin="round" stroke-linecap="round" />
<path d="M1310.0 654.0 L1305.0 700.0 L1300.0 740.0 L1300.0 800.0" fill="none" stroke="#d5dce7" stroke-width="1.6" stroke-linejoin="round" stroke-linecap="round" />
<path d="M1330.0 654.0 L1345.0 690.0 L1350.0 720.0" fill="none" stroke="#d5dce7" stroke-width="1.6" stroke-linejoin="round" stroke-linecap="round" />
<path d="M1370.0 654.0 L1380.0 700.0 L1390.0 720.0" fill="none" stroke="#d5dce7" stroke-width="1.6" stroke-linejoin="round" stroke-linecap="round" />
<path d="M1290.0 860.0 L1320.0 850.0 L1340.0 845.0" fill="none" stroke="#d5dce7" stroke-width="1.6" stroke-linejoin="round" stroke-linecap="round" />
<path d="M1395.0 840.0 L1420.0 860.0 L1440.0 880.0 L1450.0 900.0" fill="none" stroke="#d5dce7" stroke-width="1.6" stroke-linejoin="round" stroke-linecap="round" />
<path d="M1100.0 900.0 L1110.0 960.0 L1115.0 1020.0 L1120.0 1080.0" fill="none" stroke="#d5dce7" stroke-width="1.6" stroke-linejoin="round" stroke-linecap="round" />
<path d="M1130.0 900.0 L1140.0 960.0 L1150.0 1020.0" fill="none" stroke="#d5dce7" stroke-width="1.6" stroke-linejoin="round" stroke-linecap="round" />
<path d="M1090.0 880.0 L1130.0 890.0 L1170.0 885.0 L1210.0 880.0" fill="none" stroke="#d5dce7" stroke-width="1.6" stroke-linejoin="round" stroke-linecap="round" />
<path d="M1080.0 940.0 L1110.0 945.0 L1140.0 950.0 L1200.0 960.0" fill="none" stroke="#d5dce7" stroke-width="1.6" stroke-linejoin="round" stroke-linecap="round" />
<path d="M1180.0 900.0 L1190.0 930.0 L1200.0 960.0 L1220.0 990.0" fill="none" stroke="#d5dce7" stroke-width="1.6" stroke-linejoin="round" stroke-linecap="round" />
<path d="M1082.0 1000.0 L1100.0 1010.0 L1140.0 1015.0" fill="none" stroke="#d5dce7" stroke-width="1.6" stroke-linejoin="round" stroke-linecap="round" />
<path d="M1000.0 1030.0 L1030.0 1060.0 L1060.0 1080.0 L1090.0 1100.0" fill="none" stroke="#d5dce7" stroke-width="1.6" stroke-linejoin="round" stroke-linecap="round" />
<path d="M995.0 1060.0 L1040.0 1075.0 L1080.0 1080.0 L1120.0 1080.0" fill="none" stroke="#d5dce7" stroke-width="1.6" stroke-linejoin="round" stroke-linecap="round" />
<path d="M1005.0 1100.0 L1040.0 1110.0 L1080.0 1105.0 L1110.0 1100.0" fill="none" stroke="#d5dce7" stroke-width="1.6" stroke-linejoin="round" stroke-linecap="round" />
<path d="M1000.0 1140.0 L1030.0 1160.0 L1060.0 1170.0 L1100.0 1180.0" fill="none" stroke="#d5dce7" stroke-width="1.6" stroke-linejoin="round" stroke-linecap="round" />
<path d="M960.0 1190.0 L1000.0 1200.0 L1040.0 1205.0 L1100.0 1210.0" fill="none" stroke="#d5dce7" stroke-width="1.6" stroke-linejoin="round" stroke-linecap="round" />
<path d="M1010.0 1050.0 L1020.0 1100.0 L1035.0 1150.0 L1050.0 1200.0" fill="none" stroke="#d5dce7" stroke-width="1.6" stroke-linejoin="round" stroke-linecap="round" />
<path d="M990.0 1160.0 L1000.0 1200.0 L1010.0 1240.0 L1030.0 1273.0" fill="none" stroke="#d5dce7" stroke-width="1.6" stroke-linejoin="round" stroke-linecap="round" />
<path d="M1040.0 1040.0 L1050.0 1100.0 L1060.0 1160.0" fill="none" stroke="#d5dce7" stroke-width="1.6" stroke-linejoin="round" stroke-linecap="round" />
<path d="M1125.0 1040.0 L1120.0 1090.0 L1115.0 1140.0" fill="none" stroke="#d5dce7" stroke-width="1.6" stroke-linejoin="round" stroke-linecap="round" />
<path d="M1720.0 654.0 L1715.0 700.0 L1705.0 760.0 L1700.0 800.0 L1695.0 830.0 L1700.0 880.0 L1715.0 920.0" fill="none" stroke="#d5dce7" stroke-width="1.6" stroke-linejoin="round" stroke-linecap="round" />
<path d="M1745.0 654.0 L1740.0 700.0 L1730.0 740.0 L1715.0 790.0 L1712.0 830.0" fill="none" stroke="#d5dce7" stroke-width="1.6" stroke-linejoin="round" stroke-linecap="round" />
<path d="M1760.0 700.0 L1780.0 705.0 L1800.0 710.0 L1820.0 720.0" fill="none" stroke="#d5dce7" stroke-width="1.6" stroke-linejoin="round" stroke-linecap="round" />
<path d="M1700.0 760.0 L1720.0 760.0 L1745.0 765.0 L1775.0 770.0" fill="none" stroke="#d5dce7" stroke-width="1.6" stroke-linejoin="round" stroke-linecap="round" />
<path d="M1705.0 790.0 L1740.0 795.0 L1790.0 800.0" fill="none" stroke="#d5dce7" stroke-width="1.6" stroke-linejoin="round" stroke-linecap="round" />
<path d="M1735.0 720.0 L1732.0 760.0 L1730.0 800.0 L1735.0 840.0 L1745.0 880.0" fill="none" stroke="#d5dce7" stroke-width="1.6" stroke-linejoin="round" stroke-linecap="round" />
<path d="M1765.0 720.0 L1760.0 760.0 L1762.0 800.0 L1770.0 840.0" fill="none" stroke="#d5dce7" stroke-width="1.6" stroke-linejoin="round" stroke-linecap="round" />
<path d="M1800.0 720.0 L1795.0 760.0 L1800.0 800.0 L1810.0 830.0" fill="none" stroke="#d5dce7" stroke-width="1.6" stroke-linejoin="round" stroke-linecap="round" />
<path d="M1710.0 820.0 L1740.0 830.0 L1780.0 830.0 L1815.0 835.0" fill="none" stroke="#d5dce7" stroke-width="1.6" stroke-linejoin="round" stroke-linecap="round" />
<path d="M1720.0 850.0 L1750.0 860.0 L1790.0 870.0" fill="none" stroke="#d5dce7" stroke-width="1.6" stroke-linejoin="round" stroke-linecap="round" />
<path d="M1740.0 900.0 L1770.0 905.0 L1800.0 905.0" fill="none" stroke="#d5dce7" stroke-width="1.6" stroke-linejoin="round" stroke-linecap="round" />
<path d="M1735.0 980.0 L1760.0 995.0 L1790.0 1000.0 L1825.0 990.0" fill="none" stroke="#d5dce7" stroke-width="1.6" stroke-linejoin="round" stroke-linecap="round" />
<path d="M1730.0 950.0 L1740.0 990.0 L1770.0 1030.0" fill="none" stroke="#d5dce7" stroke-width="1.6" stroke-linejoin="round" stroke-linecap="round" />
<path d="M1760.0 960.0 L1780.0 990.0 L1800.0 1020.0" fill="none" stroke="#d5dce7" stroke-width="1.6" stroke-linejoin="round" stroke-linecap="round" />
<path d="M1790.0 960.0 L1800.0 1000.0" fill="none" stroke="#d5dce7" stroke-width="1.6" stroke-linejoin="round" stroke-linecap="round" />
<path d="M1850.0 960.0 L1870.0 955.0 L1908.0 960.0" fill="none" stroke="#d5dce7" stroke-width="1.6" stroke-linejoin="round" stroke-linecap="round" />
<path d="M1780.0 1120.0 L1800.0 1140.0 L1810.0 1180.0 L1780.0 1230.0" fill="none" stroke="#d5dce7" stroke-width="1.6" stroke-linejoin="round" stroke-linecap="round" />
<path d="M1740.0 1200.0 L1770.0 1180.0 L1800.0 1160.0 L1830.0 1150.0" fill="none" stroke="#d5dce7" stroke-width="1.6" stroke-linejoin="round" stroke-linecap="round" />
<path d="M1725.0 1250.0 L1760.0 1230.0 L1790.0 1210.0" fill="none" stroke="#d5dce7" stroke-width="1.6" stroke-linejoin="round" stroke-linecap="round" />
<path d="M1840.0 1075.0 L1870.0 1072.0 L1908.0 1070.0" fill="none" stroke="#d5dce7" stroke-width="1.6" stroke-linejoin="round" stroke-linecap="round" />
<path d="M1300.0 730.0 L1253.0 736.0 L1234.0 763.0 L1224.0 779.0 L1221.0 810.0 L1201.0 857.0 L1177.0 900.0 L1160.0 940.0" fill="none" stroke="#cdd6e5" stroke-width="2.3" stroke-linejoin="round" stroke-linecap="round" />
<path d="M1117.0 775.0 L1146.0 773.0 L1166.0 777.0 L1172.0 790.0 L1227.0 768.0 L1256.0 782.0 L1278.0 807.0 L1300.0 813.0 L1340.0 830.0" fill="none" stroke="#cdd6e5" stroke-width="2.3" stroke-linejoin="round" stroke-linecap="round" />
<path d="M1114.0 752.0 L1161.0 746.0 L1163.0 735.0" fill="none" stroke="#cdd6e5" stroke-width="2.3" stroke-linejoin="round" stroke-linecap="round" />
<path d="M1213.0 790.0 L1171.0 813.0 L1160.0 829.0 L1121.0 859.0" fill="none" stroke="#cdd6e5" stroke-width="2.3" stroke-linejoin="round" stroke-linecap="round" />
<path d="M1240.0 654.0 L1240.0 700.0 L1243.0 731.0 L1240.0 760.0" fill="none" stroke="#cdd6e5" stroke-width="2.3" stroke-linejoin="round" stroke-linecap="round" />
<path d="M1020.0 774.0 L1062.0 786.0" fill="none" stroke="#cdd6e5" stroke-width="2.3" stroke-linejoin="round" stroke-linecap="round" />
<path d="M1067.0 714.0 L1065.0 794.0 L1075.0 826.0 L1080.0 857.0" fill="none" stroke="#cdd6e5" stroke-width="2.3" stroke-linejoin="round" stroke-linecap="round" />
<path d="M1300.0 654.0 L1290.0 700.0 L1280.0 740.0" fill="none" stroke="#cdd6e5" stroke-width="2.3" stroke-linejoin="round" stroke-linecap="round" />
<path d="M1180.0 654.0 L1230.0 670.0 L1270.0 690.0" fill="none" stroke="#cdd6e5" stroke-width="2.3" stroke-linejoin="round" stroke-linecap="round" />
<path d="M1000.0 1020.0 L1020.0 1040.0 L1060.0 1090.0 L1075.0 1150.0" fill="none" stroke="#cdd6e5" stroke-width="2.3" stroke-linejoin="round" stroke-linecap="round" />
<path d="M990.0 1060.0 L1040.0 1062.0 L1080.0 1060.0 L1150.0 1058.0" fill="none" stroke="#cdd6e5" stroke-width="2.3" stroke-linejoin="round" stroke-linecap="round" />
<path d="M985.0 1150.0 L1030.0 1140.0 L1110.0 1150.0" fill="none" stroke="#cdd6e5" stroke-width="2.3" stroke-linejoin="round" stroke-linecap="round" />
<path d="M1003.0 1000.0 L1040.0 1012.0 L1085.0 1000.0 L1140.0 990.0" fill="none" stroke="#cdd6e5" stroke-width="2.3" stroke-linejoin="round" stroke-linecap="round" />
<path d="M1040.0 960.0 L1100.0 950.0 L1160.0 962.0" fill="none" stroke="#cdd6e5" stroke-width="2.3" stroke-linejoin="round" stroke-linecap="round" />
<path d="M950.0 1180.0 L1000.0 1170.0 L1050.0 1190.0 L1100.0 1200.0" fill="none" stroke="#cdd6e5" stroke-width="2.3" stroke-linejoin="round" stroke-linecap="round" />
<path d="M1000.0 1100.0 L1030.0 1160.0 L1035.0 1273.0" fill="none" stroke="#cdd6e5" stroke-width="2.3" stroke-linejoin="round" stroke-linecap="round" />
<path d="M1090.0 920.0 L1100.0 1000.0 L1105.0 1050.0" fill="none" stroke="#cdd6e5" stroke-width="2.3" stroke-linejoin="round" stroke-linecap="round" />
<path d="M945.0 1230.0 L990.0 1220.0 L1040.0 1235.0 L1090.0 1240.0" fill="none" stroke="#cdd6e5" stroke-width="2.3" stroke-linejoin="round" stroke-linecap="round" />
<path d="M1011.0 1005.0 L1010.0 1060.0 L1000.0 1110.0" fill="none" stroke="#cdd6e5" stroke-width="2.3" stroke-linejoin="round" stroke-linecap="round" />
<path d="M1700.0 680.0 L1720.0 700.0 L1750.0 700.0 L1780.0 705.0 L1810.0 700.0" fill="none" stroke="#cdd6e5" stroke-width="2.3" stroke-linejoin="round" stroke-linecap="round" />
<path d="M1708.0 760.0 L1760.0 762.0 L1800.0 770.0" fill="none" stroke="#cdd6e5" stroke-width="2.3" stroke-linejoin="round" stroke-linecap="round" />
<path d="M1715.0 870.0 L1760.0 880.0 L1810.0 880.0" fill="none" stroke="#cdd6e5" stroke-width="2.3" stroke-linejoin="round" stroke-linecap="round" />
<path d="M1735.0 940.0 L1780.0 950.0 L1830.0 940.0" fill="none" stroke="#cdd6e5" stroke-width="2.3" stroke-linejoin="round" stroke-linecap="round" />
<path d="M1723.0 960.0 L1740.0 1000.0 L1760.0 1030.0 L1790.0 1040.0" fill="none" stroke="#cdd6e5" stroke-width="2.3" stroke-linejoin="round" stroke-linecap="round" />
<path d="M1760.0 960.0 L1790.0 1000.0 L1835.0 1010.0" fill="none" stroke="#cdd6e5" stroke-width="2.3" stroke-linejoin="round" stroke-linecap="round" />
<path d="M1820.0 1000.0 L1850.0 1020.0 L1880.0 1030.0" fill="none" stroke="#cdd6e5" stroke-width="2.3" stroke-linejoin="round" stroke-linecap="round" />
<path d="M1740.0 660.0 L1750.0 700.0 L1752.0 760.0 L1745.0 830.0 L1755.0 880.0 L1760.0 940.0" fill="none" stroke="#cdd6e5" stroke-width="2.3" stroke-linejoin="round" stroke-linecap="round" />
<path d="M1780.0 654.0 L1790.0 700.0 L1800.0 750.0" fill="none" stroke="#cdd6e5" stroke-width="2.3" stroke-linejoin="round" stroke-linecap="round" />
<path d="M1860.0 654.0 L1850.0 700.0" fill="none" stroke="#cdd6e5" stroke-width="2.3" stroke-linejoin="round" stroke-linecap="round" />
<path d="M1770.0 1110.0 L1790.0 1140.0 L1800.0 1180.0 L1780.0 1220.0 L1760.0 1260.0" fill="none" stroke="#cdd6e5" stroke-width="2.3" stroke-linejoin="round" stroke-linecap="round" />
<path d="M1740.0 1170.0 L1780.0 1160.0 L1820.0 1150.0" fill="none" stroke="#cdd6e5" stroke-width="2.3" stroke-linejoin="round" stroke-linecap="round" />
<path d="M1740.0 1230.0 L1780.0 1205.0 L1810.0 1190.0" fill="none" stroke="#cdd6e5" stroke-width="2.3" stroke-linejoin="round" stroke-linecap="round" />
<path d="M1480.0 700.0 L1500.0 740.0 L1510.0 790.0" fill="none" stroke="#cdd6e5" stroke-width="2.3" stroke-linejoin="round" stroke-linecap="round" />
<path d="M1740.0 654.0 L1745.0 700.0 L1748.0 760.0 L1752.0 800.0" fill="none" stroke="#cdd6e5" stroke-width="2.3" stroke-linejoin="round" stroke-linecap="round" />
<path d="M1685.0 700.0 L1700.0 720.0 L1730.0 740.0" fill="none" stroke="#cdd6e5" stroke-width="2.3" stroke-linejoin="round" stroke-linecap="round" />
<path d="M1690.0 770.0 L1740.0 768.0 L1800.0 772.0 L1830.0 770.0" fill="none" stroke="#cdd6e5" stroke-width="2.3" stroke-linejoin="round" stroke-linecap="round" />
<path d="M1700.0 830.0 L1735.0 835.0 L1768.0 840.0" fill="none" stroke="#cdd6e5" stroke-width="2.3" stroke-linejoin="round" stroke-linecap="round" />
<path d="M1720.0 720.0 L1760.0 730.0 L1800.0 735.0" fill="none" stroke="#cdd6e5" stroke-width="2.3" stroke-linejoin="round" stroke-linecap="round" />
<path d="M1790.0 700.0 L1795.0 760.0 L1800.0 820.0 L1812.0 860.0" fill="none" stroke="#cdd6e5" stroke-width="2.3" stroke-linejoin="round" stroke-linecap="round" />
<path d="M1740.0 985.0 L1780.0 955.0 L1800.0 960.0" fill="none" stroke="#cdd6e5" stroke-width="2.3" stroke-linejoin="round" stroke-linecap="round" />
<path d="M1740.0 1020.0 L1770.0 990.0 L1790.0 975.0" fill="none" stroke="#cdd6e5" stroke-width="2.3" stroke-linejoin="round" stroke-linecap="round" />
<path d="M1726.0 985.0 L1760.0 1010.0" fill="none" stroke="#cdd6e5" stroke-width="2.3" stroke-linejoin="round" stroke-linecap="round" />
<path d="M1745.0 935.0 L1760.0 960.0 L1785.0 990.0" fill="none" stroke="#cdd6e5" stroke-width="2.3" stroke-linejoin="round" stroke-linecap="round" />
<path d="M1726.0 945.0 L1760.0 950.0 L1790.0 945.0" fill="none" stroke="#cdd6e5" stroke-width="2.3" stroke-linejoin="round" stroke-linecap="round" />
<path d="M1726.0 896.0 L1760.0 899.0 L1786.0 900.0" fill="none" stroke="#cdd6e5" stroke-width="2.3" stroke-linejoin="round" stroke-linecap="round" />
<path d="M1840.0 1000.0 L1870.0 1010.0 L1900.0 1020.0" fill="none" stroke="#cdd6e5" stroke-width="2.3" stroke-linejoin="round" stroke-linecap="round" />
<path d="M1726.0 895.0 L1723.0 927.0 L1721.0 974.0 L1726.0 1021.0 L1754.0 1043.0 L1801.0 1035.0 L1836.0 1024.0 L1839.0 1017.0 L1830.0 990.0 L1852.0 980.0 L1888.0 985.0 L1908.0 971.0" fill="none" stroke="#b7c4da" stroke-width="3" stroke-linejoin="round" stroke-linecap="round" />
<path d="M1113.0 654.0 L1114.0 700.0 L1114.0 760.0 L1114.0 830.0 L1113.0 858.0" fill="none" stroke="#98a8c4" stroke-width="5.2" stroke-linejoin="round" stroke-linecap="round" />
<path d="M1113.0 859.0 L1097.0 868.0 L1081.0 873.0 L1066.0 873.0 L1050.0 881.0 L1034.0 895.0 L1011.0 908.0 L1004.0 919.0 L1000.0 942.0 L992.0 966.0 L986.0 989.0 L979.0 1021.0 L984.0 1030.0 L990.0 1045.0 L978.0 1068.0 L980.0 1087.0 L982.0 1116.0 L988.0 1145.0 L963.0 1156.0 L948.0 1173.0 L938.0 1202.0 L934.0 1234.0 L957.0 1248.0 L986.0 1253.0 L1007.0 1273.0" fill="none" stroke="#98a8c4" stroke-width="5.2" stroke-linejoin="round" stroke-linecap="round" />
<path d="M1113.0 858.0 L1130.0 880.0 L1170.0 888.0 L1223.0 887.0" fill="none" stroke="#98a8c4" stroke-width="5.2" stroke-linejoin="round" stroke-linecap="round" />
<path d="M1160.0 950.0 L1223.0 887.0 L1240.0 864.0 L1276.0 839.0 L1308.0 817.0 L1343.0 791.0 L1364.0 775.0 L1386.0 753.0 L1407.0 722.0 L1420.0 690.0 L1433.0 654.0" fill="none" stroke="#98a8c4" stroke-width="5.2" stroke-linejoin="round" stroke-linecap="round" />
<path d="M1100.0 1030.0 L1085.0 1055.0 L1072.0 1110.0 L1064.0 1164.0 L1060.0 1202.0 L1062.0 1213.0" fill="none" stroke="#98a8c4" stroke-width="5.2" stroke-linejoin="round" stroke-linecap="round" />
<path d="M1100.0 1030.0 L1120.0 1000.0 L1160.0 950.0" fill="none" stroke="#98a8c4" stroke-width="5.2" stroke-linejoin="round" stroke-linecap="round" />
<path d="M1142.0 668.0 L1145.0 685.0 L1138.0 700.0" fill="none" stroke="#98a8c4" stroke-width="5.2" stroke-linejoin="round" stroke-linecap="round" />
<path d="M1153.0 1040.0 L1147.0 1056.0 L1140.0 1090.0 L1130.0 1111.0 L1115.0 1140.0 L1110.0 1154.0 L1108.0 1202.0 L1110.0 1221.0" fill="none" stroke="#98a8c4" stroke-width="5.2" stroke-linejoin="round" stroke-linecap="round" />
<path d="M1162.0 1040.0 L1173.0 1037.0 L1203.0 1028.0 L1234.0 978.0 L1277.0 952.0 L1311.0 938.0 L1346.0 928.0 L1351.0 900.0 L1351.0 875.0" fill="none" stroke="#98a8c4" stroke-width="5.2" stroke-linejoin="round" stroke-linecap="round" />
<path d="M1367.0 834.0 L1358.0 855.0" fill="none" stroke="#98a8c4" stroke-width="5.2" stroke-linejoin="round" stroke-linecap="round" />
<path d="M1144.0 1087.0 L1182.0 1071.0 L1202.0 1071.0 L1217.0 1077.0 L1296.0 1119.0 L1330.0 1127.0 L1397.0 1121.0" fill="none" stroke="#98a8c4" stroke-width="5.2" stroke-linejoin="round" stroke-linecap="round" />
<path d="M1641.0 1136.0 L1718.0 1199.0 L1747.0 1254.0 L1757.0 1273.0" fill="none" stroke="#98a8c4" stroke-width="5.2" stroke-linejoin="round" stroke-linecap="round" />
<path d="M1353.0 893.0 L1406.0 900.0 L1433.0 876.0 L1460.0 865.0 L1551.0 832.0 L1620.0 816.0 L1646.0 800.0 L1660.0 798.0 L1766.0 803.0 L1768.0 810.0 L1768.0 858.0 L1790.0 882.0 L1808.0 886.0" fill="none" stroke="#98a8c4" stroke-width="5.2" stroke-linejoin="round" stroke-linecap="round" />
<path d="M1808.0 886.0 L1815.0 910.0 L1812.0 940.0 L1807.0 992.0 L1809.0 1045.0 L1830.0 1087.0 L1835.0 1118.0 L1830.0 1202.0 L1822.0 1273.0" fill="none" stroke="#98a8c4" stroke-width="5.2" stroke-linejoin="round" stroke-linecap="round" />
<path d="M1838.0 990.0 L1860.0 985.0 L1908.0 965.0" fill="none" stroke="#98a8c4" stroke-width="5.2" stroke-linejoin="round" stroke-linecap="round" />
<path d="M1113.0 654.0 L1114.0 700.0 L1114.0 760.0 L1114.0 830.0 L1113.0 858.0" fill="none" stroke="#a9b7d0" stroke-width="3.4" stroke-linejoin="round" stroke-linecap="round" />
<path d="M1113.0 859.0 L1097.0 868.0 L1081.0 873.0 L1066.0 873.0 L1050.0 881.0 L1034.0 895.0 L1011.0 908.0 L1004.0 919.0 L1000.0 942.0 L992.0 966.0 L986.0 989.0 L979.0 1021.0 L984.0 1030.0 L990.0 1045.0 L978.0 1068.0 L980.0 1087.0 L982.0 1116.0 L988.0 1145.0 L963.0 1156.0 L948.0 1173.0 L938.0 1202.0 L934.0 1234.0 L957.0 1248.0 L986.0 1253.0 L1007.0 1273.0" fill="none" stroke="#a9b7d0" stroke-width="3.4" stroke-linejoin="round" stroke-linecap="round" />
<path d="M1113.0 858.0 L1130.0 880.0 L1170.0 888.0 L1223.0 887.0" fill="none" stroke="#a9b7d0" stroke-width="3.4" stroke-linejoin="round" stroke-linecap="round" />
<path d="M1160.0 950.0 L1223.0 887.0 L1240.0 864.0 L1276.0 839.0 L1308.0 817.0 L1343.0 791.0 L1364.0 775.0 L1386.0 753.0 L1407.0 722.0 L1420.0 690.0 L1433.0 654.0" fill="none" stroke="#a9b7d0" stroke-width="3.4" stroke-linejoin="round" stroke-linecap="round" />
<path d="M1100.0 1030.0 L1085.0 1055.0 L1072.0 1110.0 L1064.0 1164.0 L1060.0 1202.0 L1062.0 1213.0" fill="none" stroke="#a9b7d0" stroke-width="3.4" stroke-linejoin="round" stroke-linecap="round" />
<path d="M1100.0 1030.0 L1120.0 1000.0 L1160.0 950.0" fill="none" stroke="#a9b7d0" stroke-width="3.4" stroke-linejoin="round" stroke-linecap="round" />
<path d="M1142.0 668.0 L1145.0 685.0 L1138.0 700.0" fill="none" stroke="#a9b7d0" stroke-width="3.4" stroke-linejoin="round" stroke-linecap="round" />
<path d="M1153.0 1040.0 L1147.0 1056.0 L1140.0 1090.0 L1130.0 1111.0 L1115.0 1140.0 L1110.0 1154.0 L1108.0 1202.0 L1110.0 1221.0" fill="none" stroke="#a9b7d0" stroke-width="3.4" stroke-linejoin="round" stroke-linecap="round" />
<path d="M1162.0 1040.0 L1173.0 1037.0 L1203.0 1028.0 L1234.0 978.0 L1277.0 952.0 L1311.0 938.0 L1346.0 928.0 L1351.0 900.0 L1351.0 875.0" fill="none" stroke="#a9b7d0" stroke-width="3.4" stroke-linejoin="round" stroke-linecap="round" />
<path d="M1367.0 834.0 L1358.0 855.0" fill="none" stroke="#a9b7d0" stroke-width="3.4" stroke-linejoin="round" stroke-linecap="round" />
<path d="M1144.0 1087.0 L1182.0 1071.0 L1202.0 1071.0 L1217.0 1077.0 L1296.0 1119.0 L1330.0 1127.0 L1397.0 1121.0" fill="none" stroke="#a9b7d0" stroke-width="3.4" stroke-linejoin="round" stroke-linecap="round" />
<path d="M1641.0 1136.0 L1718.0 1199.0 L1747.0 1254.0 L1757.0 1273.0" fill="none" stroke="#a9b7d0" stroke-width="3.4" stroke-linejoin="round" stroke-linecap="round" />
<path d="M1353.0 893.0 L1406.0 900.0 L1433.0 876.0 L1460.0 865.0 L1551.0 832.0 L1620.0 816.0 L1646.0 800.0 L1660.0 798.0 L1766.0 803.0 L1768.0 810.0 L1768.0 858.0 L1790.0 882.0 L1808.0 886.0" fill="none" stroke="#a9b7d0" stroke-width="3.4" stroke-linejoin="round" stroke-linecap="round" />
<path d="M1808.0 886.0 L1815.0 910.0 L1812.0 940.0 L1807.0 992.0 L1809.0 1045.0 L1830.0 1087.0 L1835.0 1118.0 L1830.0 1202.0 L1822.0 1273.0" fill="none" stroke="#a9b7d0" stroke-width="3.4" stroke-linejoin="round" stroke-linecap="round" />
<path d="M1838.0 990.0 L1860.0 985.0 L1908.0 965.0" fill="none" stroke="#a9b7d0" stroke-width="3.4" stroke-linejoin="round" stroke-linecap="round" />
</svg></div>
<div class="t" style="left:1057.0px;top:650.9px;font-size:17.5px;font-weight:normal;color:#1a6fdc;letter-spacing:0.15px;text-shadow:0 0 2px #fff,0 0 1px #fff;">Chhatrapati</div>
<div class="t" style="left:1089.0px;top:674.0px;font-size:17.5px;font-weight:normal;color:#1a6fdc;letter-spacing:1.41px;text-shadow:0 0 2px #fff,0 0 1px #fff;">Shivaji</div>
<div class="t" style="left:1079.0px;top:697.1px;font-size:17.5px;font-weight:normal;color:#1a6fdc;letter-spacing:1.13px;text-shadow:0 0 2px #fff,0 0 1px #fff;">Maharaj</div>
<div class="t" style="left:1026.0px;top:721.0px;font-size:17.5px;font-weight:normal;color:#1a6fdc;letter-spacing:0.81px;text-shadow:0 0 2px #fff,0 0 1px #fff;">International...</div>
<div class="t" style="left:999.8px;top:830.8px;font-size:11.5px;font-weight:bold;color:#5f6368;letter-spacing:1.28px;text-shadow:0 0 2px #fff,0 0 2px #fff,0 0 1px #fff;">BANDRA WEST</div>
<div class="t" style="left:1128.6px;top:884.7px;font-size:17.5px;font-weight:normal;color:#3c4043;letter-spacing:-0.41px;text-shadow:0 0 2px #fff,0 0 2px #fff,0 0 1px #fff;">Sion Koliwada</div>
<div class="t" style="left:850.0px;top:941.6px;font-size:17.5px;font-weight:normal;color:#3c4043;letter-spacing:0.94px;text-shadow:0 0 2px #fff,0 0 2px #fff,0 0 1px #fff;">Shree Siddhivinayak</div>
<div class="t" style="left:965.5px;top:964.0px;font-size:17.5px;font-weight:normal;color:#3c4043;letter-spacing:0.92px;text-shadow:0 0 2px #fff,0 0 2px #fff,0 0 1px #fff;">Temple</div>
<div class="t" style="left:1087.0px;top:987.2px;font-size:13.0px;font-weight:bold;color:#4a4e55;letter-spacing:3.89px;text-shadow:0 0 2px #fff,0 0 2px #fff,0 0 1px #fff;">DADAR</div>
<div class="t" style="left:801.9px;top:1102.5px;font-size:17.5px;font-weight:normal;color:#3c4043;letter-spacing:1.01px;text-shadow:0 0 2px #fff,0 0 2px #fff,0 0 1px #fff;">Haji Ali Dargah</div>
<div class="t" style="left:992.5px;top:1202.9px;font-size:34.0px;font-weight:bold;color:#202124;letter-spacing:0.55px;text-shadow:0 0 2px #fff,0 0 2px #fff,0 0 1px #fff;">Mumbai</div>
<div class="t" style="left:1290.0px;top:852.2px;font-size:12.0px;font-weight:bold;color:#4a4e55;letter-spacing:-0.62px;text-shadow:0 0 2px #fff,0 0 2px #fff,0 0 1px #fff;">CHEMB</div>
<div class="t" style="left:1665.0px;top:763.3px;font-size:12.0px;font-weight:bold;color:#4a4e55;letter-spacing:1.55px;text-shadow:0 0 2px #fff,0 0 2px #fff,0 0 1px #fff;">VASHI</div>
<div class="t" style="left:1701.0px;top:902.8px;font-size:35.5px;font-weight:bold;color:#202124;letter-spacing:-0.57px;text-shadow:0 0 2px #fff,0 0 2px #fff,0 0 1px #fff;">Navi Mumba</div>
<div class="t" style="left:1252.3px;top:1185.1px;font-size:18.5px;font-weight:normal;color:#3c4043;letter-spacing:0.36px;text-shadow:0 0 2px #fff,0 0 2px #fff,0 0 1px #fff;">Elephanta Caves</div>
<div class="t" style="left:1804.0px;top:1167.6px;font-size:17.0px;font-weight:normal;color:#3c4043;letter-spacing:-0.39px;text-shadow:0 0 2px #fff,0 0 2px #fff,0 0 1px #fff;">Wahal</div>
<div class="t" style="left:1874.7px;top:1065.2px;font-size:19.0px;font-weight:normal;color:#1a6fdc;letter-spacing:1.11px;text-shadow:0 0 2px #fff,0 0 1px #fff;">Nav</div>
<div class="t" style="left:1844.6px;top:1087.4px;font-size:19.0px;font-weight:normal;color:#1a6fdc;letter-spacing:0.22px;text-shadow:0 0 2px #fff,0 0 1px #fff;">Internat</div>
<svg class="abs" style="left:674px;top:653.5px" width="1234" height="660" viewBox="674 653.5 1234 660"><defs><path id="setu" d="M1397 1126 C1450 1114 1510 1104 1550 1106 C1590 1108 1620 1120 1648 1142"/></defs><text font-family="Liberation Sans" font-size="14" fill="#3c4043" stroke="#fff" stroke-width="3" paint-order="stroke" ><textPath href="#setu" textLength="252" lengthAdjust="spacingAndGlyphs">Shri Atal Bihari Vajpayee Trans Hbr Link</textPath></text></svg>
<svg class="abs" style="left:674px;top:653.5px" width="1234" height="660" viewBox="674 653.5 1234 660"><g style="filter:drop-shadow(0 0 1px #fff)"><path d="M1166.0 905.0 H1198.0 M1174.5 905.0 V916.0 M1174.5 910.0 C1167.1 907.2 1166.5 913.2 1170.8 913.8 C1172.4 913.8 1173.5 912.7 1174.5 912.1 M1185.2 905.0 V916.0 M1185.2 910.0 C1177.7 907.2 1177.2 913.2 1181.5 913.8 C1183.1 913.8 1184.1 912.7 1185.2 912.1 M1195.9 905.0 V916.0 M1195.9 910.0 C1188.4 907.2 1187.9 913.2 1192.1 913.8 C1193.7 913.8 1194.8 912.7 1195.9 912.1 " fill="none" stroke="#3c4043" stroke-width="1.5" stroke-linecap="round"/><path d="M1150.0 924.0 H1213.0 M1157.2 924.0 V936.0 M1157.2 929.4 C1150.9 926.4 1150.5 933.0 1154.0 933.6 C1155.4 933.6 1156.3 932.4 1157.2 931.8 M1166.2 924.0 V936.0 M1166.2 929.4 C1159.9 926.4 1159.5 933.0 1163.0 933.6 C1164.4 933.6 1165.3 932.4 1166.2 931.8 M1175.2 924.0 V936.0 M1175.2 929.4 C1168.9 926.4 1168.5 933.0 1172.0 933.6 C1173.4 933.6 1174.3 932.4 1175.2 931.8 M1184.2 924.0 V936.0 M1184.2 929.4 C1177.9 926.4 1177.5 933.0 1181.0 933.6 C1182.4 933.6 1183.3 932.4 1184.2 931.8 M1193.2 924.0 V936.0 M1193.2 929.4 C1186.9 926.4 1186.5 933.0 1190.0 933.6 C1191.4 933.6 1192.3 932.4 1193.2 931.8 M1202.2 924.0 V936.0 M1202.2 929.4 C1195.9 926.4 1195.5 933.0 1199.0 933.6 C1200.4 933.6 1201.3 932.4 1202.2 931.8 M1211.2 924.0 V936.0 M1211.2 929.4 C1204.9 926.4 1204.5 933.0 1208.0 933.6 C1209.4 933.6 1210.3 932.4 1211.2 931.8 " fill="none" stroke="#3c4043" stroke-width="1.5" stroke-linecap="round"/><path d="M929.0 984.0 H1026.0 M936.8 984.0 V996.0 M936.8 989.4 C930.0 986.4 929.5 993.0 933.4 993.6 C934.8 993.6 935.8 992.4 936.8 991.8 M946.5 984.0 V996.0 M946.5 989.4 C939.7 986.4 939.2 993.0 943.1 993.6 C944.5 993.6 945.5 992.4 946.5 991.8 M956.2 984.0 V996.0 M956.2 989.4 C949.4 986.4 948.9 993.0 952.8 993.6 C954.2 993.6 955.2 992.4 956.2 991.8 M965.9 984.0 V996.0 M965.9 989.4 C959.1 986.4 958.6 993.0 962.5 993.6 C963.9 993.6 964.9 992.4 965.9 991.8 M975.6 984.0 V996.0 M975.6 989.4 C968.8 986.4 968.3 993.0 972.2 993.6 C973.6 993.6 974.6 992.4 975.6 991.8 M985.3 984.0 V996.0 M985.3 989.4 C978.5 986.4 978.0 993.0 981.9 993.6 C983.3 993.6 984.3 992.4 985.3 991.8 M995.0 984.0 V996.0 M995.0 989.4 C988.2 986.4 987.7 993.0 991.6 993.6 C993.0 993.6 994.0 992.4 995.0 991.8 M1004.7 984.0 V996.0 M1004.7 989.4 C997.9 986.4 997.4 993.0 1001.3 993.6 C1002.7 993.6 1003.7 992.4 1004.7 991.8 M1014.4 984.0 V996.0 M1014.4 989.4 C1007.6 986.4 1007.1 993.0 1011.0 993.6 C1012.4 993.6 1013.4 992.4 1014.4 991.8 M1024.1 984.0 V996.0 M1024.1 989.4 C1017.3 986.4 1016.8 993.0 1020.7 993.6 C1022.1 993.6 1023.1 992.4 1024.1 991.8 " fill="none" stroke="#3c4043" stroke-width="1.5" stroke-linecap="round"/><path d="M965.0 1003.0 H1026.0 M973.1 1003.0 V1015.0 M973.1 1008.4 C966.0 1005.4 965.5 1012.0 969.6 1012.6 C971.1 1012.6 972.1 1011.4 973.1 1010.8 M983.3 1003.0 V1015.0 M983.3 1008.4 C976.2 1005.4 975.7 1012.0 979.7 1012.6 C981.3 1012.6 982.3 1011.4 983.3 1010.8 M993.5 1003.0 V1015.0 M993.5 1008.4 C986.4 1005.4 985.8 1012.0 989.9 1012.6 C991.4 1012.6 992.5 1011.4 993.5 1010.8 M1003.6 1003.0 V1015.0 M1003.6 1008.4 C996.5 1005.4 996.0 1012.0 1000.1 1012.6 C1001.6 1012.6 1002.6 1011.4 1003.6 1010.8 M1013.8 1003.0 V1015.0 M1013.8 1008.4 C1006.7 1005.4 1006.2 1012.0 1010.2 1012.6 C1011.8 1012.6 1012.8 1011.4 1013.8 1010.8 M1024.0 1003.0 V1015.0 M1024.0 1008.4 C1016.9 1005.4 1016.3 1012.0 1020.4 1012.6 C1021.9 1012.6 1023.0 1011.4 1024.0 1010.8 " fill="none" stroke="#3c4043" stroke-width="1.5" stroke-linecap="round"/><path d="M1101.0 1005.0 H1135.0 M1110.1 1005.0 V1017.0 M1110.1 1010.4 C1102.1 1007.4 1101.6 1014.0 1106.1 1014.6 C1107.8 1014.6 1108.9 1013.4 1110.1 1012.8 M1121.4 1005.0 V1017.0 M1121.4 1010.4 C1113.5 1007.4 1112.9 1014.0 1117.4 1014.6 C1119.1 1014.6 1120.3 1013.4 1121.4 1012.8 M1132.7 1005.0 V1017.0 M1132.7 1010.4 C1124.8 1007.4 1124.2 1014.0 1128.8 1014.6 C1130.5 1014.6 1131.6 1013.4 1132.7 1012.8 " fill="none" stroke="#3c4043" stroke-width="1.6" stroke-linecap="round"/><path d="M1307.0 866.0 H1329.0 M1315.8 866.0 V876.0 M1315.8 870.5 C1308.1 868.0 1307.5 873.5 1312.0 874.0 C1313.6 874.0 1314.7 873.0 1315.8 872.5 M1326.8 866.0 V876.0 M1326.8 870.5 C1319.1 868.0 1318.5 873.5 1323.0 874.0 C1324.6 874.0 1325.7 873.0 1326.8 872.5 " fill="none" stroke="#3c4043" stroke-width="1.3" stroke-linecap="round"/><path d="M1673.0 778.0 H1698.0 M1679.7 778.0 V788.0 M1679.7 782.5 C1673.8 780.0 1673.4 785.5 1676.8 786.0 C1678.0 786.0 1678.8 785.0 1679.7 784.5 M1688.0 778.0 V788.0 M1688.0 782.5 C1682.2 780.0 1681.8 785.5 1685.1 786.0 C1686.3 786.0 1687.2 785.0 1688.0 784.5 M1696.3 778.0 V788.0 M1696.3 782.5 C1690.5 780.0 1690.1 785.5 1693.4 786.0 C1694.7 786.0 1695.5 785.0 1696.3 784.5 " fill="none" stroke="#3c4043" stroke-width="1.3" stroke-linecap="round"/><path d="M1323.0 1211.0 H1398.0 M1330.5 1211.0 V1223.0 M1330.5 1216.4 C1323.9 1213.4 1323.5 1220.0 1327.2 1220.6 C1328.6 1220.6 1329.6 1219.4 1330.5 1218.8 M1339.9 1211.0 V1223.0 M1339.9 1216.4 C1333.3 1213.4 1332.8 1220.0 1336.6 1220.6 C1338.0 1220.6 1338.9 1219.4 1339.9 1218.8 M1349.2 1211.0 V1223.0 M1349.2 1216.4 C1342.7 1213.4 1342.2 1220.0 1346.0 1220.6 C1347.4 1220.6 1348.3 1219.4 1349.2 1218.8 M1358.6 1211.0 V1223.0 M1358.6 1216.4 C1352.1 1213.4 1351.6 1220.0 1355.3 1220.6 C1356.8 1220.6 1357.7 1219.4 1358.6 1218.8 M1368.0 1211.0 V1223.0 M1368.0 1216.4 C1361.4 1213.4 1361.0 1220.0 1364.7 1220.6 C1366.1 1220.6 1367.1 1219.4 1368.0 1218.8 M1377.4 1211.0 V1223.0 M1377.4 1216.4 C1370.8 1213.4 1370.3 1220.0 1374.1 1220.6 C1375.5 1220.6 1376.4 1219.4 1377.4 1218.8 M1386.8 1211.0 V1223.0 M1386.8 1216.4 C1380.2 1213.4 1379.7 1220.0 1383.5 1220.6 C1384.9 1220.6 1385.8 1219.4 1386.8 1218.8 M1396.1 1211.0 V1223.0 M1396.1 1216.4 C1389.6 1213.4 1389.1 1220.0 1392.8 1220.6 C1394.2 1220.6 1395.2 1219.4 1396.1 1218.8 " fill="none" stroke="#3c4043" stroke-width="1.5" stroke-linecap="round"/><path d="M1804.0 1190.0 H1844.0 M1812.0 1190.0 V1202.0 M1812.0 1195.4 C1805.0 1192.4 1804.5 1199.0 1808.5 1199.6 C1810.0 1199.6 1811.0 1198.4 1812.0 1197.8 M1822.0 1190.0 V1202.0 M1822.0 1195.4 C1815.0 1192.4 1814.5 1199.0 1818.5 1199.6 C1820.0 1199.6 1821.0 1198.4 1822.0 1197.8 M1832.0 1190.0 V1202.0 M1832.0 1195.4 C1825.0 1192.4 1824.5 1199.0 1828.5 1199.6 C1830.0 1199.6 1831.0 1198.4 1832.0 1197.8 M1842.0 1190.0 V1202.0 M1842.0 1195.4 C1835.0 1192.4 1834.5 1199.0 1838.5 1199.6 C1840.0 1199.6 1841.0 1198.4 1842.0 1197.8 " fill="none" stroke="#3c4043" stroke-width="1.5" stroke-linecap="round"/><path d="M1745.0 944.0 H1885.0 M1767.4 944.0 V970.0 M1767.4 955.7 C1747.8 949.2 1746.4 963.5 1757.6 964.8 C1761.8 964.8 1764.6 962.2 1767.4 960.9 M1795.4 944.0 V970.0 M1795.4 955.7 C1775.8 949.2 1774.4 963.5 1785.6 964.8 C1789.8 964.8 1792.6 962.2 1795.4 960.9 M1823.4 944.0 V970.0 M1823.4 955.7 C1803.8 949.2 1802.4 963.5 1813.6 964.8 C1817.8 964.8 1820.6 962.2 1823.4 960.9 M1851.4 944.0 V970.0 M1851.4 955.7 C1831.8 949.2 1830.4 963.5 1841.6 964.8 C1845.8 964.8 1848.6 962.2 1851.4 960.9 M1879.4 944.0 V970.0 M1879.4 955.7 C1859.8 949.2 1858.4 963.5 1869.6 964.8 C1873.8 964.8 1876.6 962.2 1879.4 960.9 " fill="none" stroke="#202124" stroke-width="3.0" stroke-linecap="round"/><path d="M1027.0 1252.0 H1090.0 M1043.8 1252.0 V1274.0 M1043.8 1261.9 C1029.1 1256.4 1028.0 1268.5 1036.5 1269.6 C1039.6 1269.6 1041.7 1267.4 1043.8 1266.3 M1064.8 1252.0 V1274.0 M1064.8 1261.9 C1050.1 1256.4 1049.0 1268.5 1057.5 1269.6 C1060.6 1269.6 1062.7 1267.4 1064.8 1266.3 M1085.8 1252.0 V1274.0 M1085.8 1261.9 C1071.1 1256.4 1070.0 1268.5 1078.5 1269.6 C1081.6 1269.6 1083.7 1267.4 1085.8 1266.3 " fill="none" stroke="#202124" stroke-width="3.0" stroke-linecap="round"/></g></svg>
<svg class="abs" style="left:1033px;top:950px" width="41" height="55" viewBox="0 0 41 55"><g fill="#7d7f87" stroke="#fff" stroke-width="0.8"><path d="M12 8 C12 3 29 3 29 8 L31 12 H10 Z" fill="#3a3c44"/><rect x="18" y="12" width="5" height="6" fill="#9a9ca3"/><path d="M6 24 L9 19 L11 24 V52 H6 Z"/><path d="M12 26 L15 20 L18 26 V52 H12 Z"/><path d="M17 22 L20.5 15 L24 22 V52 H17 Z"/><path d="M23 26 L26 20 L29 26 V52 H23 Z"/><path d="M30 24 L32 19 L35 24 V52 H30 Z"/><rect x="3" y="51.5" width="35" height="2.5" fill="#3a3c44"/></g></svg>
<svg class="abs" style="left:939px;top:1080px" width="66" height="62" viewBox="0 0 66 62"><g stroke="#fff" stroke-width="0.8"><rect x="46" y="14" width="7" height="40" fill="#6f7179"/><path d="M45 14 C45 8 54 8 54 14 Z" fill="#3a3c44"/><rect x="49" y="2" width="1.2" height="6" fill="#3a3c44"/><rect x="4" y="36" width="58" height="20" fill="#a6a8ae"/><rect x="18" y="26" width="20" height="30" fill="#8d8f96"/><path d="M36 38 C36 30 48 30 48 38 Z" fill="#3a3c44"/><path d="M24 56 V46 C24 41 32 41 32 46 V56 Z" fill="#3a3c44"/><rect x="20" y="18" width="2" height="9" fill="#3a3c44"/><rect x="8" y="28" width="2" height="9" fill="#3a3c44"/><rect x="3" y="55" width="60" height="3" fill="#3a3c44"/></g></svg>
<svg class="abs" style="left:1406px;top:1187px" width="59" height="32" viewBox="0 0 59 32"><rect x="0.5" y="0.5" width="58" height="31" fill="#b9bbc1" stroke="#fff"/><rect x="4" y="4" width="51" height="4" fill="#6a6c74"/><g fill="#3a3c44"><rect x="6" y="8" width="4" height="19"/><rect x="13" y="8" width="4" height="19"/><rect x="20" y="8" width="18" height="19"/><rect x="41" y="8" width="4" height="19"/><rect x="48" y="8" width="4" height="19"/></g><rect x="2" y="27" width="55" height="3" fill="#6a6c74"/></svg>
<svg class="abs" style="left:1158px;top:673px;overflow:visible" width="36" height="42" viewBox="-18 -18 36 42"><path d="M0 21.5 C-3 18 -5 17 -7 15.5 C-13 13 -16.5 7 -16.5 0 A16.5 16.5 0 1 1 7 15.5 C5 17 3 18 0 21.5 Z" fill="#fff" style="filter:drop-shadow(0 1px 1px rgba(0,0,0,.3))"/><circle r="14" fill="#1a73e8"/><path d="M0 -9 C1 -9 1.5 -8 1.5 -6.5 V-2 L9 2 V4 L1.5 2 V6 L4 8 V9.5 L0 8.5 L-4 9.5 V8 L-1.5 6 V2 L-9 4 V2 L-1.5 -2 V-6.5 C-1.5 -8 -1 -9 0 -9 Z" fill="#fff"/></svg>
<svg class="abs" style="left:1129.9px;top:1004.4px;overflow:visible" width="48" height="54" viewBox="-24 -24 48 54"><path d="M0 26.5 C-3 22 -6 20.5 -9 19 C-16 16 -20.5 9 -20.5 0 A20.5 20.5 0 1 1 9 19 C6 20.5 3 22 0 26.5 Z" fill="#fff" style="filter:drop-shadow(0 1px 1.5px rgba(0,0,0,.35))"/><circle cx="0" cy="0" r="17.3" fill="#1b6ee0"/></svg><div class="t" style="left:1148.9px;top:1019.7px;font-size:18.0px;font-weight:normal;color:#ffffff;letter-spacing:0.00px;">2</div>
<svg class="abs" style="left:1327.4px;top:841.0px;overflow:visible" width="48" height="54" viewBox="-24 -24 48 54"><path d="M0 26.5 C-3 22 -6 20.5 -9 19 C-16 16 -20.5 9 -20.5 0 A20.5 20.5 0 1 1 9 19 C6 20.5 3 22 0 26.5 Z" fill="#fff" style="filter:drop-shadow(0 1px 1.5px rgba(0,0,0,.35))"/><circle cx="0" cy="0" r="17.3" fill="#1b6ee0"/></svg><div class="t" style="left:1346.4px;top:856.3px;font-size:18.0px;font-weight:normal;color:#ffffff;letter-spacing:0.00px;">3</div>
<svg class="abs" style="left:1622.4px;top:750.2px;overflow:visible" width="48" height="54" viewBox="-24 -24 48 54"><path d="M0 26.5 C-3 22 -6 20.5 -9 19 C-16 16 -20.5 9 -20.5 0 A20.5 20.5 0 1 1 9 19 C6 20.5 3 22 0 26.5 Z" fill="#fff" style="filter:drop-shadow(0 1px 1.5px rgba(0,0,0,.35))"/><circle cx="0" cy="0" r="17.3" fill="#1b6ee0"/></svg><div class="t" style="left:1641.4px;top:765.5px;font-size:18.0px;font-weight:normal;color:#ffffff;letter-spacing:0.00px;">4</div>
<svg class="abs" style="left:1784.6px;top:861.9px;overflow:visible" width="48" height="54" viewBox="-24 -24 48 54"><path d="M0 26.5 C-3 22 -6 20.5 -9 19 C-16 16 -20.5 9 -20.5 0 A20.5 20.5 0 1 1 9 19 C6 20.5 3 22 0 26.5 Z" fill="#fff" style="filter:drop-shadow(0 1px 1.5px rgba(0,0,0,.35))"/><circle cx="0" cy="0" r="17.3" fill="#1b6ee0"/></svg><div class="t" style="left:1803.6px;top:877.2px;font-size:18.0px;font-weight:normal;color:#ffffff;letter-spacing:0.00px;">5</div>
<svg class="abs" style="left:1812.7px;top:1116.6px;overflow:visible" width="48" height="54" viewBox="-24 -24 48 54"><path d="M0 26.5 C-3 22 -6 20.5 -9 19 C-16 16 -20.5 9 -20.5 0 A20.5 20.5 0 1 1 9 19 C6 20.5 3 22 0 26.5 Z" fill="#fff" style="filter:drop-shadow(0 1px 1.5px rgba(0,0,0,.35))"/><circle cx="0" cy="0" r="17.3" fill="#d21f32"/></svg><div class="t" style="left:1831.7px;top:1131.9px;font-size:18.0px;font-weight:normal;color:#ffffff;letter-spacing:0.00px;">6</div>
<svg class="abs" style="left:1064.7px;top:1211.0px;overflow:visible" width="48" height="54" viewBox="-24 -24 48 54"><path d="M0 26.5 C-3 22 -6 20.5 -9 19 C-16 16 -20.5 9 -20.5 0 A20.5 20.5 0 1 1 9 19 C6 20.5 3 22 0 26.5 Z" fill="#fff" style="filter:drop-shadow(0 1px 1.5px rgba(0,0,0,.35))"/><circle cx="0" cy="0" r="17.3" fill="#1b7a50"/></svg><div class="t" style="left:1083.7px;top:1226.3px;font-size:18.0px;font-weight:normal;color:#ffffff;letter-spacing:0.00px;">1</div>
<div class="abs" style="left:1745px;top:668px;width:156px;height:39px;border-radius:20px;background:#fff;box-shadow:0 1px 4px rgba(0,0,0,.22)"></div>
<svg class="abs" style="left:1758px;top:679px" width="17" height="17" viewBox="0 0 17 17" fill="none" stroke="#4a4f5e" stroke-width="1.6" stroke-linecap="round" stroke-linejoin="round"><path d="M7 2.5 H4 C3 2.5 2.5 3 2.5 4 V13 C2.5 14 3 14.5 4 14.5 H13 C14 14.5 14.5 14 14.5 13 V10"/><path d="M10 2.5 H14.5 V7 M14.5 2.5 L8 9"/></svg>
<div class="t" style="left:1780.7px;top:680.3px;font-size:15.3px;font-weight:normal;color:#3c4252;letter-spacing:-0.11px;">Click to Expand</div>
<div class="abs" style="left:1843px;top:1175px;width:40px;height:90px;border-radius:8px;background:#fff;box-shadow:0 1px 4px rgba(0,0,0,.22)"></div>
<div class="abs" style="left:1848.5px;top:1220px;width:29px;height:1px;background:#d5d5dc"></div>
<svg class="abs" style="left:1853px;top:1188px" width="20" height="64" viewBox="0 0 20 64" stroke="#5f6368" stroke-width="1.8"><path d="M10 2 V18 M2 10 H18 M2.5 55 H17.5"/></svg>
<div class="abs" style="left:674px;top:653.5px;width:1234px;height:660px;border-radius:12px;border:1.5px solid #d9d9e6;pointer-events:none"></div>
<div id="rail"></div><div class="abs" style="left:2007.5px;top:75px;width:26px;height:26px;border-radius:6px;background:#f68f3a"></div>
<svg class="abs" style="left:2007.5px;top:75px" width="26" height="26" viewBox="0 0 26 26" fill="none" stroke="#fff" stroke-width="2.4" stroke-linecap="round"><path d="M9.2 9.5 C9.2 7.2 11 5.6 13 5.6 C15.2 5.6 16.8 7.1 16.8 9.2 C16.8 11.5 13.2 12 13.2 15"/><circle cx="13.2" cy="19.6" r="0.6" fill="#fff"/></svg>
<svg class="abs" style="left:2000px;top:118px" width="40" height="40" viewBox="0 0 40 40" fill="none" stroke-linecap="round" stroke-linejoin="round">
 <path d="M8.2 15.1 H13.5 C14.6 15.1 15.1 16 14.6 16.8 L8.6 26 C8 27 8.6 28.1 9.8 28.1 H17 C17.8 28.1 18.4 27.7 18.8 27 L21.5 19.5" stroke="#2a6fcf" stroke-width="1.6"/>
 <path d="M20.5 18 L18.4 22.3 C18 23.2 18.6 24 19.5 23.7 L23 26.2 M18.6 23.5 L26.5 16.5 C27.4 15.7 28.6 16 29 17 L32.6 26.6 C32.9 27.6 32.2 28.3 31.2 28 L21.5 25" stroke="#2a6fcf" stroke-width="1.6"/>
 <path d="M22.3 125.2 C22.6 128.3 23.6 129.3 26.7 129.6 C23.6 129.9 22.6 130.9 22.3 134 C22 130.9 21 129.9 17.9 129.6 C21 129.3 22 128.3 22.3 125.2 Z" transform="translate(0,-118)" fill="#1f8a5a"/>
 <path d="M26.7 6 C26.8 7.3 27.3 7.8 28.6 7.9 C27.3 8 26.8 8.5 26.7 9.8 C26.6 8.5 26.1 8 24.8 7.9 C26.1 7.8 26.6 7.3 26.7 6 Z" fill="#e0383e"/>
</svg>
<svg class="abs" style="left:2000px;top:160px" width="40" height="40" viewBox="0 0 40 40" fill="none" stroke="#1f2433" stroke-width="1.7" stroke-linejoin="round">
 <path d="M18.5 12.5 C19.3 18 21.8 21.2 27.8 22.2 C21.8 23.2 19.3 26.4 18.5 32 C17.7 26.4 15.2 23.2 9.2 22.2 C15.2 21.2 17.7 18 18.5 12.5 Z"/>
 <path d="M28 9 C28.3 11 29 11.8 31.2 12.7 C29 13.6 28.3 14.4 28 16.4 C27.7 14.4 27 13.6 24.8 12.7 C27 11.8 27.7 11 28 9 Z" fill="#1f2433" stroke-width="0.8"/>
</svg>
<div class="abs" style="left:2005px;top:214.5px;width:31px;height:1.5px;background:#dcdce4"></div>
<svg class="abs" style="left:2000px;top:232px" width="40" height="40" viewBox="0 0 40 40" fill="none" stroke="#6b7183" stroke-width="1.9" stroke-linejoin="round" stroke-linecap="round">
 <path d="M15 8.8 C15.5 7.4 16.9 7 18 7.8 L26 14 L24.3 22.8 L12.5 24 C11 24.1 10.2 23 10.5 21.7 Z"/>
 <path d="M26 14.2 L29.5 15.2 C30.6 15.5 31 16.3 30.8 17.3 L29.5 22.5 C29.2 23.5 28.5 23.9 27.5 23.7 L24.3 22.8"/>
 <path d="M22.5 23.3 L20.5 30 C20.2 31.2 21 32 22 32 C22.8 32 23.4 31.5 23.7 30.8 L27 23.8"/>
</svg>
<svg class="abs" style="left:2007px;top:286px" width="27" height="28" viewBox="0 0 27 28" fill="none" stroke="#6b7080" stroke-width="2" stroke-linejoin="round" stroke-linecap="round">
 <rect x="1.5" y="1.5" width="24" height="18" rx="4"/>
 <path d="M11 6.5 L17 10.5 L11 14.5 Z"/>
 <path d="M13.5 19.5 V25.5 M8.5 25.5 H18.5"/>
</svg>
<div class="abs" style="left:2005px;top:333px;width:31px;height:1.5px;background:#dcdce4"></div>
<svg class="abs" style="left:2007px;top:356px" width="27" height="27" viewBox="0 0 27 27" fill="none" stroke="#2a6fcf" stroke-width="1.8" stroke-linejoin="round" stroke-linecap="round">
 <path d="M9 1.5 H4.5 C2.8 1.5 1.5 2.8 1.5 4.5 V15.5 C1.5 17.2 2.8 18.5 4.5 18.5 H11"/>
 <path d="M16 1.5 H22.5 C24.2 1.5 25.5 2.8 25.5 4.5 V15.5 C25.5 17.2 24.2 18.5 22.5 18.5 H17 L12.5 24.5"/>
 <circle cx="8.5" cy="10" r="1.35" fill="#e0383e" stroke="none"/><circle cx="13.5" cy="10" r="1.35" fill="#e0383e" stroke="none"/><circle cx="18.5" cy="10" r="1.35" fill="#e0383e" stroke="none"/>
</svg>
<svg class="abs" style="left:2007px;top:404px" width="27" height="27" viewBox="0 0 27 27" fill="none" stroke="#6b7080" stroke-width="2" stroke-linejoin="round">
 <path d="M3.5 9 V5 C3.5 3.3 4.8 2 6.5 2 H10 L12.5 4.5 H20.5 C22.2 4.5 23.5 5.8 23.5 7.5 V9"/>
 <path d="M3.5 9 H23.5 C25 9 25.8 10.2 25.5 11.5 L24 22 C23.8 23.6 22.5 24.8 20.8 24.8 H6.2 C4.5 24.8 3.2 23.6 3 22 L1.5 11.5 C1.2 10.2 2 9 3.5 9 Z"/>
</svg>
<div class="abs" style="left:2005px;top:450px;width:31px;height:1.5px;background:#dcdce4"></div>
<svg class="abs" style="left:2007px;top:473px" width="27" height="27" viewBox="0 0 27 27" fill="none" stroke-linejoin="round">
 <path d="M3 6 L14 4 L15.5 22 L4.5 24 Z" stroke="#e0383e" stroke-width="1.8" fill="#fff"/>
 <path d="M12 3 L25 1.5 L24 20 L12 21 Z" stroke="#2a6fcf" stroke-width="1.8" fill="#fff"/>
 <rect x="6" y="6.5" width="15" height="18" stroke="#f68f3a" stroke-width="1.8" fill="#fff"/>
 <path d="M9 10.5 H18 M9 13.5 H18 M9 16.5 H18 M9 19.5 H16" stroke="#1f2433" stroke-width="1.6"/>
 <path d="M9 22 H12.5" stroke="#2a6fcf" stroke-width="1.4"/>
</svg>
<div class="abs" style="left:1997.5px;top:1209.5px;width:45px;height:45px;border-radius:23px;background:#e4e4ec"></div>
<svg class="abs" style="left:2012px;top:1224px" width="16" height="16" viewBox="0 0 16 16" fill="none" stroke="#1f2433" stroke-width="2.4" stroke-linecap="round" stroke-linejoin="round"><path d="M6 3.5 L10.5 8 L6 12.5"/></svg>

</body></html>
